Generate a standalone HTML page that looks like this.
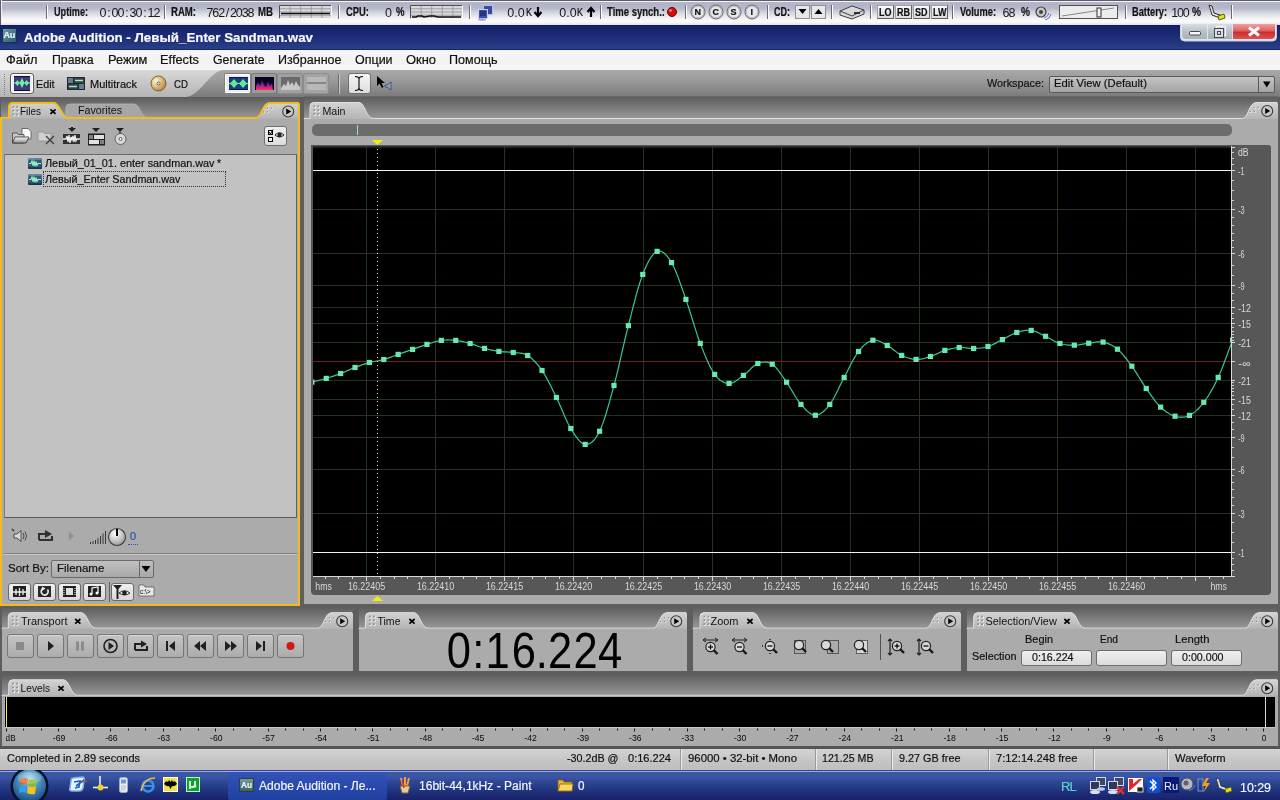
<!DOCTYPE html><html><head><meta charset="utf-8"><style>*{margin:0;padding:0;box-sizing:border-box}
html,body{width:1280px;height:800px;overflow:hidden;background:#5e5e5e;font-family:"Liberation Sans",sans-serif;position:relative}
.a{position:absolute}
.t{position:absolute;white-space:nowrap;line-height:1;-webkit-text-stroke:0.2px currentColor}
#top{left:0;top:0;width:1280px;height:25px;background:linear-gradient(#5c5c68 0,#5c5c68 1px,#f4f4f8 1px,#f4f4f8 2px,#b2b4c8 2px,#b4b6ca 8px,#d6d8e0 13px,#f6f6f8 19px,#fbfbfc 22px,#e0e0ea 25px);border-left:1px solid #5c5c68;box-shadow:inset 1px 0 0 #f0f0f4}
#title{left:0;top:25px;width:1280px;height:25px;background:linear-gradient(#101c50 0,#101c50 1px,#142268 1px,#1a2870 30%,#22347c 70%,#2a3e8a 95%,#1c2464 96%)}
#menu{left:0;top:50px;width:1280px;height:20px;background:linear-gradient(#f6f6fa,#f2f2f6 60%,#f4f4f2 70%,#f4f4f4 95%,#fcfcfc)}
#tool{left:0;top:70px;width:1280px;height:27px;background:linear-gradient(#a8a8a8,#9c9c9c 35%,#7a7a7a)}
.sep{position:absolute;width:1px;background:#707070;border-right:1px solid #ffffff}
.top-t{font-size:12px;color:#101010;top:6px}
.menu-t{font-size:13px;color:#111;top:53px}
</style></head><body><div id="wrap" style="position:absolute;left:0;top:0;width:1280px;height:800px;will-change:transform"><div id="top" class="a"></div><div class="a" style="left:46px;top:5px;width:1px;height:14px;background:#6a6a70"></div><div class="a" style="left:47px;top:5px;width:1px;height:14px;background:#fff"></div><div class="t" style="left:53.50px;top:6.44px;font-size:12px;color:#141414;font-weight:bold;font-family:'Liberation Sans',sans-serif;transform:scaleX(0.7612);transform-origin:0 0;">Uptime:</div><svg class="a" style="left:0;top:0" width="1280" height="25"><text x="103.00 109.00 115.00 121.00 127.00 133.00 139.00 145.00 151.00 157.00" y="17" text-anchor="middle" font-family="Liberation Sans" font-size="12.5" fill="#1a1a1a" transform="translate(0,0)">0:00:30:12</text></svg><div class="a" style="left:164px;top:5px;width:1px;height:14px;background:#6a6a70"></div><div class="a" style="left:165px;top:5px;width:1px;height:14px;background:#fff"></div><div class="t" style="left:170.50px;top:6.44px;font-size:12px;color:#141414;font-weight:bold;font-family:'Liberation Sans',sans-serif;transform:scaleX(0.7981);transform-origin:0 0;">RAM:</div><svg class="a" style="left:0;top:0" width="1280" height="25"><text x="209.94 215.81 221.69 227.56 233.44 239.31 245.19 251.06" y="17" text-anchor="middle" font-family="Liberation Sans" font-size="12.5" fill="#1a1a1a" transform="translate(0,0)">762/2038</text></svg><div class="t" style="left:258.00px;top:6.44px;font-size:12px;color:#141414;font-weight:bold;font-family:'Liberation Sans',sans-serif;transform:scaleX(0.8037);transform-origin:0 0;">MB</div><svg class="a" style="left:279px;top:5px" width="53" height="14"><rect x="0" y="0" width="53" height="14" fill="#d8d8dc"/><path d="M0.5,13.5 L0.5,0.5 L52.5,0.5" stroke="#505050" fill="none"/><path d="M0.5,13.5 L52.5,13.5 L52.5,0.5" stroke="#f8f8f8" fill="none"/><line x1="1" x2="52" y1="3.75" y2="3.75" stroke="#8a8a8a" stroke-width="0.7"/><line x1="1" x2="52" y1="7.00" y2="7.00" stroke="#8a8a8a" stroke-width="0.7"/><line x1="1" x2="52" y1="10.25" y2="10.25" stroke="#8a8a8a" stroke-width="0.7"/><line x1="11.1" x2="11.1" y1="1" y2="13" stroke="#8a8a8a" stroke-width="0.7"/><line x1="21.7" x2="21.7" y1="1" y2="13" stroke="#8a8a8a" stroke-width="0.7"/><line x1="32.3" x2="32.3" y1="1" y2="13" stroke="#8a8a8a" stroke-width="0.7"/><line x1="42.9" x2="42.9" y1="1" y2="13" stroke="#8a8a8a" stroke-width="0.7"/><path d="M2,8.5 L51,8.5" stroke="#101010" fill="none" stroke-width="1.6"/></svg><div class="a" style="left:338px;top:5px;width:1px;height:14px;background:#6a6a70"></div><div class="a" style="left:339px;top:5px;width:1px;height:14px;background:#fff"></div><div class="t" style="left:345.50px;top:6.44px;font-size:12px;color:#141414;font-weight:bold;font-family:'Liberation Sans',sans-serif;transform:scaleX(0.7841);transform-origin:0 0;">CPU:</div><svg class="a" style="left:0;top:0" width="1280" height="25"><text x="388.50" y="17" text-anchor="middle" font-family="Liberation Sans" font-size="12.5" fill="#1a1a1a" transform="translate(0,0)">0</text></svg><div class="t" style="left:395.50px;top:6.44px;font-size:12px;color:#141414;font-weight:bold;font-family:'Liberation Sans',sans-serif;transform:scaleX(0.7966);transform-origin:0 0;">%</div><svg class="a" style="left:410px;top:5px" width="53" height="14"><rect x="0" y="0" width="53" height="14" fill="#d8d8dc"/><path d="M0.5,13.5 L0.5,0.5 L52.5,0.5" stroke="#505050" fill="none"/><path d="M0.5,13.5 L52.5,13.5 L52.5,0.5" stroke="#f8f8f8" fill="none"/><line x1="1" x2="52" y1="3.75" y2="3.75" stroke="#8a8a8a" stroke-width="0.7"/><line x1="1" x2="52" y1="7.00" y2="7.00" stroke="#8a8a8a" stroke-width="0.7"/><line x1="1" x2="52" y1="10.25" y2="10.25" stroke="#8a8a8a" stroke-width="0.7"/><line x1="11.1" x2="11.1" y1="1" y2="13" stroke="#8a8a8a" stroke-width="0.7"/><line x1="21.7" x2="21.7" y1="1" y2="13" stroke="#8a8a8a" stroke-width="0.7"/><line x1="32.3" x2="32.3" y1="1" y2="13" stroke="#8a8a8a" stroke-width="0.7"/><line x1="42.9" x2="42.9" y1="1" y2="13" stroke="#8a8a8a" stroke-width="0.7"/><path d="M2,12 L6,12 L8,11 L12,11 L14,12 L20,11 L24,11 L28,12 L51,12" stroke="#101010" fill="none" stroke-width="1.5"/></svg><div class="a" style="left:469px;top:5px;width:1px;height:14px;background:#6a6a70"></div><div class="a" style="left:470px;top:5px;width:1px;height:14px;background:#fff"></div><svg class="a" style="left:476px;top:4px" width="18" height="17"><rect x="7.5" y="1.5" width="9" height="9" fill="#3a4aa0" stroke="#b8c0f0"/><rect x="2.5" y="5.5" width="9" height="9" fill="#4050a8" stroke="#c8d0f8"/><rect x="4" y="7" width="6" height="5" fill="#2a3480"/><ellipse cx="6" cy="15.5" rx="4" ry="1.3" fill="#a0a8e0"/></svg><svg class="a" style="left:0;top:0" width="1280" height="25"><text x="510.67 516.00 521.33" y="17" text-anchor="middle" font-family="Liberation Sans" font-size="12.5" fill="#1a1a1a" transform="translate(0,0)">0.0</text></svg><div class="t" style="left:525.50px;top:7.54px;font-size:10px;color:#101010;font-weight:normal;font-family:'Liberation Sans',sans-serif;transform:scaleX(0.8995);transform-origin:0 0;">K</div><svg class="a" style="left:533px;top:6px" width="10" height="12"><path d="M5,1 L5,9 M1.5,6 L5,10 L8.5,6" stroke="#000" stroke-width="2.2" fill="none"/></svg><svg class="a" style="left:0;top:0" width="1280" height="25"><text x="562.67 568.00 573.33" y="17" text-anchor="middle" font-family="Liberation Sans" font-size="12.5" fill="#1a1a1a" transform="translate(0,0)">0.0</text></svg><div class="t" style="left:577.00px;top:7.54px;font-size:10px;color:#101010;font-weight:normal;font-family:'Liberation Sans',sans-serif;transform:scaleX(0.8995);transform-origin:0 0;">K</div><svg class="a" style="left:586px;top:6px" width="10" height="12"><path d="M5,11 L5,3 M1.5,6 L5,2 L8.5,6" stroke="#000" stroke-width="2.2" fill="none"/></svg><div class="a" style="left:600px;top:5px;width:1px;height:14px;background:#6a6a70"></div><div class="a" style="left:601px;top:5px;width:1px;height:14px;background:#fff"></div><div class="t" style="left:606.50px;top:6.44px;font-size:12px;color:#141414;font-weight:bold;font-family:'Liberation Sans',sans-serif;transform:scaleX(0.7930);transform-origin:0 0;">Time synch.:</div><svg class="a" style="left:666px;top:6px" width="12" height="12"><circle cx="6" cy="6" r="4.5" fill="#d01010" stroke="#600"/><circle cx="4.5" cy="4.5" r="1.3" fill="#ff9090"/></svg><div class="a" style="left:685px;top:5px;width:1px;height:14px;background:#6a6a70"></div><div class="a" style="left:686px;top:5px;width:1px;height:14px;background:#fff"></div><svg class="a" style="left:690px;top:4px" width="16" height="16"><circle cx="8" cy="8" r="7" fill="#e8e8ec" stroke="#606060"/><circle cx="8" cy="8" r="5.8" fill="none" stroke="#b8b8c0"/></svg><div class="t" style="left:694.5px;top:8px;font-size:9px;color:#111;font-weight:bold;">N</div><svg class="a" style="left:708px;top:4px" width="16" height="16"><circle cx="8" cy="8" r="7" fill="#e8e8ec" stroke="#606060"/><circle cx="8" cy="8" r="5.8" fill="none" stroke="#b8b8c0"/></svg><div class="t" style="left:712.5px;top:8px;font-size:9px;color:#111;font-weight:bold;">C</div><svg class="a" style="left:726px;top:4px" width="16" height="16"><circle cx="8" cy="8" r="7" fill="#e8e8ec" stroke="#606060"/><circle cx="8" cy="8" r="5.8" fill="none" stroke="#b8b8c0"/></svg><div class="t" style="left:730.5px;top:8px;font-size:9px;color:#111;font-weight:bold;">S</div><svg class="a" style="left:744px;top:4px" width="16" height="16"><circle cx="8" cy="8" r="7" fill="#e8e8ec" stroke="#606060"/><circle cx="8" cy="8" r="5.8" fill="none" stroke="#b8b8c0"/></svg><div class="t" style="left:750.5px;top:8px;font-size:9px;color:#111;font-weight:bold;">I</div><div class="a" style="left:767px;top:5px;width:1px;height:14px;background:#6a6a70"></div><div class="a" style="left:768px;top:5px;width:1px;height:14px;background:#fff"></div><div class="t" style="left:773.50px;top:6.44px;font-size:12px;color:#141414;font-weight:bold;font-family:'Liberation Sans',sans-serif;transform:scaleX(0.7502);transform-origin:0 0;">CD:</div><svg class="a" style="left:795px;top:5px" width="32" height="14"><rect x="0.5" y="0.5" width="14" height="13" fill="#e8e8e8" stroke="#909090"/><rect x="16.5" y="0.5" width="14" height="13" fill="#e8e8e8" stroke="#909090"/><path d="M3.5,4 L11.5,4 L7.5,9Z" fill="#000"/><path d="M19.5,9 L27.5,9 L23.5,4Z" fill="#000"/></svg><div class="a" style="left:831px;top:5px;width:1px;height:14px;background:#6a6a70"></div><div class="a" style="left:832px;top:5px;width:1px;height:14px;background:#fff"></div><svg class="a" style="left:838px;top:4px" width="28" height="16"><path d="M2,7 L14,2 L26,6 L26,10 L14,15 L2,11Z" fill="#d8d8d8" stroke="#404040"/><path d="M2,7 L14,12 L26,6" fill="none" stroke="#404040"/><rect x="16" y="8" width="6" height="2" fill="#303030"/></svg><div class="a" style="left:870px;top:5px;width:1px;height:14px;background:#6a6a70"></div><div class="a" style="left:871px;top:5px;width:1px;height:14px;background:#fff"></div><div class="a" style="left:877px;top:5px;width:17px;height:14px;background:linear-gradient(#fafafa,#dcdcdc);border:1px solid #a0a0a0;border-right-color:#606060;border-bottom-color:#606060"></div><div class="t" style="left:878.5px;top:8px;font-size:10px;color:#111;font-weight:bold;transform:scaleX(0.9);transform-origin:0 0">LO</div><div class="a" style="left:895px;top:5px;width:17px;height:14px;background:linear-gradient(#fafafa,#dcdcdc);border:1px solid #a0a0a0;border-right-color:#606060;border-bottom-color:#606060"></div><div class="t" style="left:896.5px;top:8px;font-size:10px;color:#111;font-weight:bold;transform:scaleX(0.9);transform-origin:0 0">RB</div><div class="a" style="left:913px;top:5px;width:17px;height:14px;background:linear-gradient(#fafafa,#dcdcdc);border:1px solid #a0a0a0;border-right-color:#606060;border-bottom-color:#606060"></div><div class="t" style="left:914.5px;top:8px;font-size:10px;color:#111;font-weight:bold;transform:scaleX(0.9);transform-origin:0 0">SD</div><div class="a" style="left:931px;top:5px;width:17px;height:14px;background:linear-gradient(#fafafa,#dcdcdc);border:1px solid #a0a0a0;border-right-color:#606060;border-bottom-color:#606060"></div><div class="t" style="left:932.5px;top:8px;font-size:10px;color:#111;font-weight:bold;transform:scaleX(0.9);transform-origin:0 0">LW</div><div class="a" style="left:952px;top:5px;width:1px;height:14px;background:#6a6a70"></div><div class="a" style="left:953px;top:5px;width:1px;height:14px;background:#fff"></div><div class="t" style="left:959.50px;top:6.44px;font-size:12px;color:#141414;font-weight:bold;font-family:'Liberation Sans',sans-serif;transform:scaleX(0.7751);transform-origin:0 0;">Volume:</div><svg class="a" style="left:0;top:0" width="1280" height="25"><text x="1006.00 1012.00" y="17" text-anchor="middle" font-family="Liberation Sans" font-size="12.5" fill="#1a1a1a" transform="translate(0,0)">68</text></svg><div class="t" style="left:1020.50px;top:6.44px;font-size:12px;color:#141414;font-weight:bold;font-family:'Liberation Sans',sans-serif;transform:scaleX(0.8435);transform-origin:0 0;">%</div><svg class="a" style="left:1034px;top:4px" width="18" height="17"><circle cx="7" cy="8" r="5" fill="#c8c8c8" stroke="#404040" stroke-width="1.2"/><circle cx="7" cy="8" r="2" fill="#404040"/><path d="M10,14 Q14,13 15,9 M11,16 Q16,15 17,10" stroke="#6070d0" fill="none"/></svg><svg class="a" style="left:1059px;top:5px" width="59" height="14"><rect x="0.5" y="0.5" width="58" height="13" fill="#ececec" stroke="#505050"/><path d="M3,11 L55,3" stroke="#888" fill="none"/><rect x="38" y="3" width="4" height="9" fill="#f0f0f0" stroke="#303030"/></svg><div class="a" style="left:1125px;top:5px;width:1px;height:14px;background:#6a6a70"></div><div class="a" style="left:1126px;top:5px;width:1px;height:14px;background:#fff"></div><div class="t" style="left:1131.50px;top:6.44px;font-size:12px;color:#141414;font-weight:bold;font-family:'Liberation Sans',sans-serif;transform:scaleX(0.7718);transform-origin:0 0;">Battery:</div><svg class="a" style="left:0;top:0" width="1280" height="25"><text x="1174.83 1180.50 1186.17" y="17" text-anchor="middle" font-family="Liberation Sans" font-size="12.5" fill="#1a1a1a" transform="translate(0,0)">100</text></svg><div class="t" style="left:1191.50px;top:6.44px;font-size:12px;color:#141414;font-weight:bold;font-family:'Liberation Sans',sans-serif;transform:scaleX(0.8435);transform-origin:0 0;">%</div><svg class="a" style="left:1206px;top:3px" width="20" height="18"><path d="M3,2 L6,12 L14,15 L17,13 L8,10 L6,3Z" fill="#e0e0e0" stroke="#303030"/><path d="M12,13 L18,11 L19,15 L13,17Z" fill="#e0e020" stroke="#606000"/></svg><div class="a" style="left:1231px;top:5px;width:1px;height:14px;background:#6a6a70"></div><div class="a" style="left:1232px;top:5px;width:1px;height:14px;background:#fff"></div><div id="title" class="a"></div><div class="a" style="left:2px;top:28px;width:15px;height:15px;background:linear-gradient(135deg,#6a9ab0,#2c5870);border:1px solid #1a3040;border-radius:1px"></div><div class="t" style="left:3.5px;top:31px;font-size:9px;color:#e8f4f8;font-weight:bold;letter-spacing:-0.3px">Au</div><div class="t" style="left:24.00px;top:30.60px;font-size:13px;color:#f8f8ff;font-weight:bold;font-family:'Liberation Sans',sans-serif;transform:scaleX(1.0247);transform-origin:0 0;">Adobe Audition - Левый_Enter Sandman.wav</div><svg class="a" style="left:1180px;top:24px" width="98" height="18">
<path d="M0.5,0 L0.5,13 Q0.5,17 4.5,17 L92.5,17 Q96.5,17 96.5,13 L96.5,0" fill="#dfe6f0" stroke="#c8d0e0"/>
<defs><linearGradient id="wbg" x1="0" y1="0" x2="0" y2="1"><stop offset="0" stop-color="#d8dee6"/><stop offset="0.5" stop-color="#b8c0c8"/><stop offset="1" stop-color="#a8b0b8"/></linearGradient>
<linearGradient id="wbr" x1="0" y1="0" x2="0" y2="1"><stop offset="0" stop-color="#f0a0a0"/><stop offset="0.45" stop-color="#e06060"/><stop offset="0.55" stop-color="#c83030"/><stop offset="1" stop-color="#e05050"/></linearGradient></defs>
<path d="M2,0 L27,0 L27,15 L6,15 Q2,15 2,11Z" fill="url(#wbg)"/>
<rect x="28" y="0" width="24" height="15" fill="url(#wbg)"/>
<path d="M53,0 L95,0 L95,11 Q95,15 91,15 L53,15Z" fill="url(#wbr)"/>
<rect x="9.5" y="7.5" width="11" height="3.5" rx="1" fill="#f8f8f8" stroke="#404850"/>
<rect x="36.5" y="2.5" width="9" height="9" fill="none" stroke="#f8f8f8" stroke-width="1.2"/>
<rect x="34.5" y="4.5" width="9" height="9" fill="#dde" stroke="#404850" stroke-width="1"/>
<rect x="37.5" y="7.5" width="3" height="3" fill="none" stroke="#404850"/>
<path d="M69,3.5 L79,11.5 M79,3.5 L69,11.5" stroke="#fff" stroke-width="3"/>
</svg><div id="menu" class="a"></div><div class="t" style="left:6.10px;top:54.22px;font-size:12.5px;color:#111;font-weight:normal;font-family:'Liberation Sans',sans-serif;transform:scaleX(1.0283);transform-origin:0 0;">Файл</div><div class="t" style="left:51.70px;top:54.22px;font-size:12.5px;color:#111;font-weight:normal;font-family:'Liberation Sans',sans-serif;transform:scaleX(0.9852);transform-origin:0 0;">Правка</div><div class="t" style="left:107.70px;top:54.22px;font-size:12.5px;color:#111;font-weight:normal;font-family:'Liberation Sans',sans-serif;transform:scaleX(1.0223);transform-origin:0 0;">Режим</div><div class="t" style="left:160.20px;top:54.22px;font-size:12.5px;color:#111;font-weight:normal;font-family:'Liberation Sans',sans-serif;transform:scaleX(1.0268);transform-origin:0 0;">Effects</div><div class="t" style="left:212.70px;top:54.22px;font-size:12.5px;color:#111;font-weight:normal;font-family:'Liberation Sans',sans-serif;transform:scaleX(0.9881);transform-origin:0 0;">Generate</div><div class="t" style="left:278.20px;top:54.22px;font-size:12.5px;color:#111;font-weight:normal;font-family:'Liberation Sans',sans-serif;transform:scaleX(1.0024);transform-origin:0 0;">Избранное</div><div class="t" style="left:355.20px;top:54.22px;font-size:12.5px;color:#111;font-weight:normal;font-family:'Liberation Sans',sans-serif;transform:scaleX(0.9996);transform-origin:0 0;">Опции</div><div class="t" style="left:406.20px;top:54.22px;font-size:12.5px;color:#111;font-weight:normal;font-family:'Liberation Sans',sans-serif;transform:scaleX(1.0328);transform-origin:0 0;">Окно</div><div class="t" style="left:449.20px;top:54.22px;font-size:12.5px;color:#111;font-weight:normal;font-family:'Liberation Sans',sans-serif;transform:scaleX(1.0046);transform-origin:0 0;">Помощь</div><div id="tool" class="a"></div><svg class="a" style="left:0;top:70px" width="260" height="27"><defs><linearGradient id="tlg" x1="0" y1="0" x2="0" y2="1"><stop offset="0" stop-color="#d8d8d8"/><stop offset="1" stop-color="#b4b4b4"/></linearGradient></defs>
<path d="M0,0 L223,0 C210,1 200,26 186,27 L0,27Z" fill="url(#tlg)"/></svg><div class="a" style="left:4px;top:74px;width:1px;height:21px;border-left:1px dotted #808080"></div><div class="a" style="left:10px;top:73px;width:24px;height:21px;background:#eeeef4;border:1px solid #5a5a5a;border-radius:3px;box-shadow:inset 0 0 0 1px #fff"></div><svg class="a" style="left:14px;top:76px" width="16" height="15"><rect x="0" y="0" width="16" height="15" fill="#10102a"/><rect x="0" y="1" width="16" height="13" fill="#3c3a78"/>
<path d="M1,7 L3.5,4 L5.5,7 L8,2 L10.5,7 L12.5,4 L15,7 L12.5,10 L10.5,7 L8,12 L5.5,7 L3.5,10Z" fill="#70f0a0"/><path d="M0,7 L16,7" stroke="#70f0a0" stroke-width="1"/></svg><div class="t" style="left:36.20px;top:78.77px;font-size:11.5px;color:#111;font-weight:normal;font-family:'Liberation Sans',sans-serif;transform:scaleX(0.9335);transform-origin:0 0;">Edit</div><svg class="a" style="left:67px;top:77px" width="18" height="13"><rect x="0" y="0" width="18" height="13" fill="#202830"/>
<rect x="1" y="1" width="5" height="5" fill="#6a7a90"/><rect x="7" y="1" width="10" height="5" fill="#30404a"/><path d="M8,3.5 L16,3.5" stroke="#a0f0b0" stroke-width="1.5"/>
<rect x="1" y="7" width="10" height="5" fill="#30404a"/><path d="M2,9.5 L10,9.5" stroke="#a0f0b0" stroke-width="1.5"/><rect x="12" y="7" width="5" height="5" fill="#6a7a90"/></svg><div class="t" style="left:90.30px;top:78.77px;font-size:11.5px;color:#111;font-weight:normal;font-family:'Liberation Sans',sans-serif;transform:scaleX(0.9552);transform-origin:0 0;">Multitrack</div><svg class="a" style="left:150px;top:75px" width="17" height="17"><defs><radialGradient id="cdg" cx="0.35" cy="0.35" r="0.7"><stop offset="0" stop-color="#fff8e0"/><stop offset="0.5" stop-color="#e0c080"/><stop offset="1" stop-color="#b08040"/></radialGradient></defs>
<circle cx="8.5" cy="8.5" r="7.5" fill="url(#cdg)" stroke="#806030"/><circle cx="8.5" cy="8.5" r="1.5" fill="#f0f0f0" stroke="#404040" stroke-width="0.8"/></svg><div class="t" style="left:173.50px;top:78.77px;font-size:11.5px;color:#111;font-weight:normal;font-family:'Liberation Sans',sans-serif;transform:scaleX(0.8428);transform-origin:0 0;">CD</div><div class="a" style="left:224px;top:73px;width:27px;height:21px;background:#ececf2;border:1px solid #808080;border-radius:2px;box-shadow:inset 0 0 0 1px #fff"></div><svg class="a" style="left:229px;top:77px" width="19" height="13"><rect width="19" height="13" fill="#1a3a80"/><rect x="0" y="0" width="19" height="1" fill="#0a1a50"/><rect x="0" y="12" width="19" height="1" fill="#0a1a50"/>
<path d="M1,6.5 L5,2 L9,6.5 L5,11Z M10,6.5 L14,2 L18,6.5 L14,11Z" fill="#60e890"/><path d="M0,6.5 L19,6.5" stroke="#60e890" stroke-width="1.2"/></svg><div class="a" style="left:251px;top:73px;width:26px;height:21px;background:#9a9a9a;border:1px solid #7a7a7a;border-radius:2px"></div><svg class="a" style="left:255px;top:77px" width="19" height="13"><defs><linearGradient id="spg" x1="0" y1="0" x2="0" y2="1"><stop offset="0" stop-color="#100040"/><stop offset="0.5" stop-color="#8020a0"/><stop offset="1" stop-color="#ff3060"/></linearGradient></defs>
<rect width="19" height="13" fill="#0a0020"/><path d="M1,13 L1,9 L3,5 L5,9 L7,2 L9,8 L11,10 L13,4 L15,9 L17,6 L18,13Z" fill="url(#spg)"/></svg><div class="a" style="left:277px;top:73px;width:26px;height:21px;background:#a0a0a0;border:1px solid #8a8a8a;border-radius:2px"></div><svg class="a" style="left:281px;top:77px" width="19" height="13"><rect width="19" height="13" fill="#6a6a6a"/><path d="M0,11 L3,7 L5,9 L7,3 L9,8 L11,5 L13,9 L15,4 L17,8 L19,10 L19,13 L0,13Z" fill="#c8c8c8"/></svg><div class="a" style="left:303px;top:73px;width:26px;height:21px;background:#a4a4a4;border:1px solid #8e8e8e;border-radius:2px"></div><div class="a" style="left:307px;top:77px;width:19px;height:13px;background:linear-gradient(#b8b8b8 0,#b8b8b8 5px,#888 5px,#888 7px,#b8b8b8 7px)"></div><div class="a" style="left:338px;top:74px;width:1px;height:20px;background:#6a6a6a;box-shadow:1px 0 0 #c8c8c8"></div><div class="a" style="left:348px;top:73px;width:23px;height:21px;background:linear-gradient(#f4f4f4,#dedede);border:1px solid #707070;border-radius:3px"></div><svg class="a" style="left:353px;top:75px" width="12" height="17"><path d="M2,1.5 Q6,1.5 6,4 L6,13 Q6,15.5 2,15.5 M10,1.5 Q6,1.5 6,4 M6,13 Q6,15.5 10,15.5" stroke="#000" fill="none" stroke-width="1.1"/></svg><svg class="a" style="left:376px;top:75px" width="18" height="17"><path d="M1,1 L1,11 L3.5,8.5 L6,13 L7.5,12 L5.5,8 L9,8Z" fill="#000"/><path d="M9,10 L11,10 L15,7 L15,15 L11,12 L9,12Z" fill="#8aa0c0" stroke="#304060" stroke-width="0.7"/></svg><div class="t" style="left:987.00px;top:78.27px;font-size:11.5px;color:#111;font-weight:normal;font-family:'Liberation Sans',sans-serif;transform:scaleX(0.9421);transform-origin:0 0;">Workspace:</div><div class="a" style="left:1049px;top:76px;width:226px;height:17px;background:linear-gradient(#c4c4c4,#b0b0b0 60%,#a6a6a6);border:1px solid #5a5a5a;border-radius:2px"></div><div class="a" style="left:1258px;top:77px;width:1px;height:15px;background:#5a5a5a"></div><div class="t" style="left:1054.00px;top:78.27px;font-size:11.5px;color:#111;font-weight:normal;font-family:'Liberation Sans',sans-serif;transform:scaleX(0.9787);transform-origin:0 0;">Edit View (Default)</div><svg class="a" style="left:1262px;top:81px" width="10" height="8"><path d="M1,0.5 L8.5,0.5 L4.75,6.5Z" fill="#000"/></svg><svg class="a" style="left:0;top:0" width="1280" height="800"><defs><linearGradient id="gfiles" x1="0" y1="103" x2="0" y2="120" gradientUnits="userSpaceOnUse"><stop offset="0" stop-color="#d2d2d2"/><stop offset="1" stop-color="#b2b2b2"/></linearGradient><linearGradient id="gfilesh" x1="0" y1="97" x2="0" y2="118" gradientUnits="userSpaceOnUse"><stop offset="0" stop-color="#5c5c5c"/><stop offset="1" stop-color="#989898"/></linearGradient><clipPath id="gfilesc"><rect x="0" y="0" width="1280" height="118.5"/></clipPath></defs><rect x="1" y="97" width="298" height="21" fill="url(#gfilesh)"/><path d="M66,118 L66,108 Q66,104 70,104 L134,104 C140,104 141,118 148,118Z" fill="#a6a6a6" stroke="#b8b8b8" stroke-width="0.8"/><text x="78" y="113.6" font-family="Liberation Sans" font-size="11" fill="#111" textLength="44" lengthAdjust="spacingAndGlyphs">Favorites</text><path d="M1,605L1,118L9,118L9,107Q9,103 13,103L54,103C60,103 61,118 68,118L256,118C262,118 262,103 270,103L298,103L299,104L299,605Z" fill="#ababab"/><path d="M1,605L1,118L9,118L9,107Q9,103 13,103L54,103C60,103 61,118 68,118L256,118C262,118 262,103 270,103L298,103L299,104L299,605Z" fill="url(#gfiles)" clip-path="url(#gfilesc)"/><path d="M1,605L1,118L9,118L9,107Q9,103 13,103L54,103C60,103 61,118 68,118L256,118C262,118 262,103 270,103L298,103" fill="none" stroke="#e0e0e0" stroke-width="1" clip-path="url(#gfilesc)"/><path d="M1,605L1,118L9,118L9,107Q9,103 13,103L54,103C60,103 61,118 68,118L256,118C262,118 262,103 270,103L298,103L299,104L299,605Z" fill="none" stroke="#f0bc20" stroke-width="2"/><rect x="13.1" y="106.6" width="2" height="2" fill="#f8f8f8"/><rect x="12.5" y="106.0" width="1.8" height="1.8" fill="#909090"/><rect x="17.1" y="106.6" width="2" height="2" fill="#f8f8f8"/><rect x="16.5" y="106.0" width="1.8" height="1.8" fill="#909090"/><rect x="13.1" y="110.4" width="2" height="2" fill="#f8f8f8"/><rect x="12.5" y="109.8" width="1.8" height="1.8" fill="#909090"/><rect x="17.1" y="110.4" width="2" height="2" fill="#f8f8f8"/><rect x="16.5" y="109.8" width="1.8" height="1.8" fill="#909090"/><rect x="13.1" y="114.2" width="2" height="2" fill="#f8f8f8"/><rect x="12.5" y="113.6" width="1.8" height="1.8" fill="#909090"/><rect x="17.1" y="114.2" width="2" height="2" fill="#f8f8f8"/><rect x="16.5" y="113.6" width="1.8" height="1.8" fill="#909090"/><text x="20" y="115.2" font-family="Liberation Sans" font-size="11" fill="#111" textLength="21" lengthAdjust="spacingAndGlyphs">Files</text><path d="M50.4,109.3 L55.6,113.89999999999999 M55.6,109.3 L50.4,113.89999999999999" stroke="#000" stroke-width="1.7"/><rect x="267" y="107.5" width="2" height="2" fill="#f4f4f4"/><rect x="267" y="107.5" width="1.3" height="1.3" fill="#7a7a7a"/><rect x="271" y="107.5" width="2" height="2" fill="#f4f4f4"/><rect x="271" y="107.5" width="1.3" height="1.3" fill="#7a7a7a"/><rect x="263" y="111.3" width="2" height="2" fill="#f4f4f4"/><rect x="263" y="111.3" width="1.3" height="1.3" fill="#7a7a7a"/><rect x="267" y="111.3" width="2" height="2" fill="#f4f4f4"/><rect x="267" y="111.3" width="1.3" height="1.3" fill="#7a7a7a"/><circle cx="288.2" cy="111.5" r="5.5" fill="#c8c8c8" stroke="#3a3a3a" stroke-width="1.1"/><path d="M286.2,108.5 L291.2,111.5 L286.2,114.5Z" fill="#000"/></svg><svg class="a" style="left:10px;top:127px" width="125" height="20">
<defs><linearGradient id="fld" x1="0" y1="0" x2="0" y2="1"><stop offset="0" stop-color="#f8f8f8"/><stop offset="1" stop-color="#909090"/></linearGradient></defs>
<path d="M12,1.5 L18,1.5 L21,4.5 L21,12 L12,12Z" fill="#fafafa" stroke="#505050" stroke-width="0.8"/>
<path d="M2.5,6 L7,6 L8.5,7.5 L14,7.5 L14,16 L2.5,16Z" fill="#c8c8c8" stroke="#404040" stroke-width="0.8"/>
<path d="M2.5,16 L5,10 L19,10 L16,16Z" fill="url(#fld)" stroke="#303030" stroke-width="0.8"/>
<path d="M28,5 L33,5 L34.5,6.5 L41,6.5 L41,14 L28,14Z" fill="#d0d0d0" stroke="#909090" stroke-width="0.8"/>
<path d="M36,9 L44,17 M44,9 L36,17" stroke="#404040" stroke-width="1.4"/>
<path d="M58,1 L66,1 L62,5Z M61,0 L63,0 L63,2 L61,2Z" fill="#202020"/>
<rect x="53" y="7" width="17" height="10" fill="#303030"/><path d="M53,12 L56,12 L57,9 L58,15 L59,8 L60,16 L61,10 L62,13 L63,9 L64,15 L65,8 L66,14 L67,12 L70,12" stroke="#f0f0f0" stroke-width="1.3" fill="none"/>
<path d="M82,1 L90,1 L86,5Z" fill="#202020"/>
<rect x="78" y="6.5" width="17" height="12" fill="#202020"/><rect x="79" y="8" width="4" height="4" fill="#808080"/><rect x="84" y="8" width="10" height="4" fill="#e0e0e0"/><rect x="79" y="13" width="10" height="4" fill="#e0e0e0"/><rect x="90" y="13" width="4" height="4" fill="#808080"/>
<path d="M106,1 L114,1 L110,5Z" fill="#202020"/><rect x="109" y="5" width="2" height="3" fill="#404040"/>
<circle cx="110.5" cy="12" r="5.5" fill="#d8d8d8" stroke="#606060"/><circle cx="110.5" cy="12" r="1.5" fill="#fff" stroke="#404040" stroke-width="0.8"/>
</svg><div class="a" style="left:264px;top:126px;width:23px;height:20px;background:linear-gradient(#f0f0f0,#dcdcdc);border:1px solid #707070;border-radius:3px"></div><svg class="a" style="left:266px;top:128px" width="20" height="17"><rect x="2.5" y="2.5" width="4" height="4" fill="#fff" stroke="#000"/><path d="M3,4 L4.5,6 L7,1.5" stroke="#000" fill="none" stroke-width="1"/>
<rect x="2.5" y="9.5" width="4" height="4" fill="#fff" stroke="#000"/>
<path d="M9,7 Q13.5,2.5 18,7 Q13.5,11 9,7Z" fill="#fff" stroke="#202020"/><circle cx="13.5" cy="7" r="2.2" fill="#202020"/></svg><div class="a" style="left:4px;top:154px;width:293px;height:364px;background:#c2c2c2;border-top:1px solid #6a6a6a;border-left:1px solid #7a7a7a;border-bottom:1px solid #5a5a5a;border-right:1px solid #5e5e5e"></div><svg class="a" style="left:28px;top:158px" width="14" height="11"><defs><linearGradient id="fic0" x1="0" y1="0" x2="0" y2="1"><stop offset="0" stop-color="#6a8aa8"/><stop offset="1" stop-color="#1a2a48"/></linearGradient></defs><rect width="14" height="11" rx="1" fill="url(#fic0)"/><rect x="1" y="2" width="12" height="7" fill="#2a5a78"/><path d="M1,5.5 L3,5.5 L4,3 L5,8 L6,2.5 L7,8.5 L8,3.5 L9,7.5 L10,5.5 L13,5.5" stroke="#9af8c8" stroke-width="1.1" fill="none"/></svg><div class="t" style="left:44.50px;top:157.87px;font-size:11.5px;color:#111;font-weight:normal;font-family:'Liberation Sans',sans-serif;transform:scaleX(0.9423);transform-origin:0 0;">Левый_01_01. enter sandman.wav</div><svg class="a" style="left:28px;top:174px" width="14" height="11"><defs><linearGradient id="fic1" x1="0" y1="0" x2="0" y2="1"><stop offset="0" stop-color="#6a8aa8"/><stop offset="1" stop-color="#1a2a48"/></linearGradient></defs><rect width="14" height="11" rx="1" fill="url(#fic1)"/><rect x="1" y="2" width="12" height="7" fill="#2a5a78"/><path d="M1,5.5 L3,5.5 L4,3 L5,8 L6,2.5 L7,8.5 L8,3.5 L9,7.5 L10,5.5 L13,5.5" stroke="#9af8c8" stroke-width="1.1" fill="none"/></svg><div class="t" style="left:44.50px;top:173.87px;font-size:11.5px;color:#111;font-weight:normal;font-family:'Liberation Sans',sans-serif;transform:scaleX(0.9364);transform-origin:0 0;">Левый_Enter Sandman.wav</div><div class="t" style="left:217.00px;top:157.69px;font-size:11px;color:#111;font-weight:normal;font-family:'Liberation Sans',sans-serif;transform:scaleX(0.9345);transform-origin:0 0;">*</div><div class="a" style="left:43px;top:171px;width:183px;height:16px;border:1px dotted #303030"></div><svg class="a" style="left:10px;top:527px" width="130" height="20">
<path d="M2,2 L4,4" stroke="#303030" stroke-width="1.2"/>
<path d="M4,7 L7,7 L11,3.5 L11,14.5 L7,11 L4,11Z" fill="#d8d8d8" stroke="#404040" stroke-width="0.9"/>
<path d="M13,6 Q15,9 13,12 M15,4.5 Q18,9 15,13.5" stroke="#404040" fill="none" stroke-width="0.9"/>
<path d="M29,13 L29,7 L36,7 M42,9 L42,13 L29,13" stroke="#303030" fill="none" stroke-width="2"/><path d="M35,3 L42,7 L35,11Z" fill="#303030"/>
<path d="M59,4.5 L64,9 L59,13.5Z" fill="#909090"/>
<path d="M80.5,17 L80.5,15 M83,17 L83,14 M85.5,17 L85.5,13 M88,17 L88,11 M90.5,17 L90.5,9 M93,17 L93,6.5 M95.5,17 L95.5,4" stroke="#383838" stroke-width="1"/>
</svg><svg class="a" style="left:107px;top:527px" width="22" height="20"><defs><radialGradient id="kng" cx="0.4" cy="0.3" r="0.8"><stop offset="0" stop-color="#ffffff"/><stop offset="1" stop-color="#909090"/></radialGradient></defs><circle cx="10" cy="10" r="8.5" fill="url(#kng)" stroke="#404040" stroke-width="1.2"/><path d="M10,2 L10,9" stroke="#000" stroke-width="2"/></svg><div class="t" style="left:130px;top:531px;font-size:11px;color:#2850b0;font-weight:normal;">0</div><div class="a" style="left:128px;top:544px;width:10px;height:1px;border-top:1px dotted #2850b0"></div><div class="a" style="left:4px;top:553px;width:293px;height:1px;background:#808080;box-shadow:0 1px 0 #c8c8c8"></div><div class="t" style="left:8px;top:563px;font-size:11.5px;color:#111;font-weight:normal;">Sort By:</div><div class="a" style="left:51px;top:560px;width:103px;height:18px;background:linear-gradient(#c0c0c0,#a8a8a8);border:1px solid #6a6a6a;border-radius:2px"></div><div class="a" style="left:139px;top:561px;width:1px;height:16px;background:#6a6a6a"></div><div class="t" style="left:57px;top:563px;font-size:11.5px;color:#111;font-weight:normal;">Filename</div><svg class="a" style="left:141px;top:565px" width="10" height="8"><path d="M0.5,1 L9.5,1 L5,7Z" fill="#000"/></svg><div class="a" style="left:8px;top:583px;width:23px;height:18px;background:linear-gradient(#f0f0f0,#d8d8d8);border:1px solid #6a6a6a;border-radius:3px"></div><div class="a" style="left:33px;top:583px;width:23px;height:18px;background:linear-gradient(#f0f0f0,#d8d8d8);border:1px solid #6a6a6a;border-radius:3px"></div><div class="a" style="left:58px;top:583px;width:23px;height:18px;background:linear-gradient(#f0f0f0,#d8d8d8);border:1px solid #6a6a6a;border-radius:3px"></div><div class="a" style="left:83px;top:583px;width:23px;height:18px;background:linear-gradient(#f0f0f0,#d8d8d8);border:1px solid #6a6a6a;border-radius:3px"></div><div class="a" style="left:111px;top:583px;width:23px;height:18px;background:linear-gradient(#f0f0f0,#d8d8d8);border:1px solid #6a6a6a;border-radius:3px"></div><div class="a" style="left:109px;top:582px;width:1px;height:20px;background:#606060"></div><svg class="a" style="left:8px;top:583px" width="150" height="18">
<rect x="5" y="3" width="13" height="11" fill="#202020"/><path d="M5,9 L18,9 M8,6 L8,12 M11.5,5 L11.5,13 M15,6 L15,12" stroke="#f0f0f0" stroke-width="1.3" fill="none"/>
<rect x="30" y="3" width="13" height="11" fill="#282828"/><path d="M39.5,6.5 A3.5,3.5 0 1 1 35,5.5" stroke="#f0f0f0" stroke-width="1.6" fill="none"/><path d="M34,3.5 L37.5,5.5 L34,7.8Z" fill="#f0f0f0"/>
<rect x="55" y="3" width="13" height="11" fill="#202020"/><rect x="58" y="5" width="7" height="7" fill="#e0e0e0"/><path d="M56,5 L56,12 M67,5 L67,12" stroke="#fff" stroke-dasharray="1 1"/>
<rect x="80" y="3" width="13" height="11" fill="#202020"/><path d="M84,11 L84,5 L90,4 L90,10" stroke="#fff" stroke-width="1.2" fill="none"/><circle cx="83" cy="11" r="1.5" fill="#fff"/><circle cx="89" cy="10" r="1.5" fill="#fff"/>
<path d="M105,2 L114,2 L110.5,6 L110.5,16 L108.5,16 L108.5,6Z" fill="#202020"/><path d="M111,10 Q116.5,5.5 122,10 Q116.5,14 111,10Z" fill="#f0f0f0" stroke="#303030"/><circle cx="116.5" cy="10" r="2.3" fill="#202020"/>
<path d="M131,2 L136,2 L137,4 L146,4 L146,13 L131,13Z" fill="#e8e8e8" stroke="#606060" stroke-width="0.8"/>
<text x="132" y="11" font-family="Liberation Sans" font-size="6.5" fill="#000">c:\&gt;</text>
</svg><svg class="a" style="left:0;top:0" width="1280" height="800"><defs><linearGradient id="gmain" x1="0" y1="102.5" x2="0" y2="120.5" gradientUnits="userSpaceOnUse"><stop offset="0" stop-color="#d2d2d2"/><stop offset="1" stop-color="#b2b2b2"/></linearGradient><linearGradient id="gmainh" x1="0" y1="96.5" x2="0" y2="118.5" gradientUnits="userSpaceOnUse"><stop offset="0" stop-color="#5c5c5c"/><stop offset="1" stop-color="#989898"/></linearGradient><clipPath id="gmainc"><rect x="0" y="0" width="1280" height="119.0"/></clipPath></defs><rect x="304" y="96.5" width="974" height="22.0" fill="url(#gmainh)"/><path d="M304,604L304,118.5L310,118.5L310,106.5Q310,102.5 314,102.5L359,102.5C365,102.5 366,118.5 373,118.5L1242.5,118.5C1248.5,118.5 1248.5,102.5 1256.5,102.5L1277,102.5L1278,103.5L1278,604Z" fill="#ababab"/><path d="M304,604L304,118.5L310,118.5L310,106.5Q310,102.5 314,102.5L359,102.5C365,102.5 366,118.5 373,118.5L1242.5,118.5C1248.5,118.5 1248.5,102.5 1256.5,102.5L1277,102.5L1278,103.5L1278,604Z" fill="url(#gmain)" clip-path="url(#gmainc)"/><path d="M304,604L304,118.5L310,118.5L310,106.5Q310,102.5 314,102.5L359,102.5C365,102.5 366,118.5 373,118.5L1242.5,118.5C1248.5,118.5 1248.5,102.5 1256.5,102.5L1277,102.5" fill="none" stroke="#e0e0e0" stroke-width="1" clip-path="url(#gmainc)"/><rect x="314.1" y="106.1" width="2" height="2" fill="#f8f8f8"/><rect x="313.5" y="105.5" width="1.8" height="1.8" fill="#909090"/><rect x="318.1" y="106.1" width="2" height="2" fill="#f8f8f8"/><rect x="317.5" y="105.5" width="1.8" height="1.8" fill="#909090"/><rect x="314.1" y="109.9" width="2" height="2" fill="#f8f8f8"/><rect x="313.5" y="109.3" width="1.8" height="1.8" fill="#909090"/><rect x="318.1" y="109.9" width="2" height="2" fill="#f8f8f8"/><rect x="317.5" y="109.3" width="1.8" height="1.8" fill="#909090"/><rect x="314.1" y="113.7" width="2" height="2" fill="#f8f8f8"/><rect x="313.5" y="113.1" width="1.8" height="1.8" fill="#909090"/><rect x="318.1" y="113.7" width="2" height="2" fill="#f8f8f8"/><rect x="317.5" y="113.1" width="1.8" height="1.8" fill="#909090"/><text x="322.5" y="114.7" font-family="Liberation Sans" font-size="11" fill="#111" textLength="23" lengthAdjust="spacingAndGlyphs">Main</text><rect x="1253.5" y="107.0" width="2" height="2" fill="#f4f4f4"/><rect x="1253.5" y="107.0" width="1.3" height="1.3" fill="#7a7a7a"/><rect x="1257.5" y="107.0" width="2" height="2" fill="#f4f4f4"/><rect x="1257.5" y="107.0" width="1.3" height="1.3" fill="#7a7a7a"/><rect x="1249.5" y="110.8" width="2" height="2" fill="#f4f4f4"/><rect x="1249.5" y="110.8" width="1.3" height="1.3" fill="#7a7a7a"/><rect x="1253.5" y="110.8" width="2" height="2" fill="#f4f4f4"/><rect x="1253.5" y="110.8" width="1.3" height="1.3" fill="#7a7a7a"/><circle cx="1267.2" cy="111.0" r="5.5" fill="#c8c8c8" stroke="#3a3a3a" stroke-width="1.1"/><path d="M1265.2,108.0 L1270.2,111.0 L1265.2,114.0Z" fill="#000"/></svg><div class="a" style="left:312px;top:124px;width:920px;height:12px;background:#6c6c6c;border-radius:5px"></div><div class="a" style="left:357px;top:125px;width:1px;height:10px;background:#9fe0c8"></div><div class="a" style="left:311px;top:145px;width:960px;height:450px;background:#575757;border-radius:0 3px 4px 4px"></div><svg class="a" style="left:0;top:0" width="1280" height="800"><rect x="313" y="146" width="918" height="430" fill="#000"/><defs><clipPath id="wc"><rect x="313" y="146" width="918" height="430"/></clipPath></defs><g clip-path="url(#wc)"><rect x="313" y="342" width="918" height="1" fill="#203420"/><rect x="313" y="380" width="918" height="1" fill="#203420"/><rect x="313" y="323" width="918" height="1" fill="#203420"/><rect x="313" y="399" width="918" height="1" fill="#203420"/><rect x="313" y="307" width="918" height="1" fill="#203420"/><rect x="313" y="415" width="918" height="1" fill="#203420"/><rect x="313" y="285" width="918" height="1" fill="#203420"/><rect x="313" y="437" width="918" height="1" fill="#203420"/><rect x="313" y="253" width="918" height="1" fill="#203420"/><rect x="313" y="469" width="918" height="1" fill="#203420"/><rect x="313" y="209" width="918" height="1" fill="#203420"/><rect x="313" y="513" width="918" height="1" fill="#203420"/><rect x="366" y="146" width="1" height="430" fill="#203420"/><rect x="435" y="146" width="1" height="430" fill="#203420"/><rect x="504" y="146" width="1" height="430" fill="#203420"/><rect x="573" y="146" width="1" height="430" fill="#203420"/><rect x="643" y="146" width="1" height="430" fill="#203420"/><rect x="712" y="146" width="1" height="430" fill="#203420"/><rect x="781" y="146" width="1" height="430" fill="#203420"/><rect x="850" y="146" width="1" height="430" fill="#203420"/><rect x="919" y="146" width="1" height="430" fill="#203420"/><rect x="988" y="146" width="1" height="430" fill="#203420"/><rect x="1057" y="146" width="1" height="430" fill="#203420"/><rect x="1126" y="146" width="1" height="430" fill="#203420"/><rect x="1195" y="146" width="1" height="430" fill="#203420"/><rect x="313" y="170" width="918" height="1" fill="#f4f4f4"/><rect x="313" y="552" width="918" height="1" fill="#f4f4f4"/><rect x="313" y="361" width="918" height="1" fill="#7c1a22"/><line x1="377.5" x2="377.5" y1="149" y2="576" stroke="#f4f0b0" stroke-width="1" stroke-dasharray="1 3"/><path d="M311.86,382.10 L312.72,381.89 L313.82,381.62 L315.12,381.30 L316.58,380.94 L318.15,380.56 L319.80,380.14 L321.48,379.71 L323.14,379.28 L324.74,378.84 L326.25,378.40 L327.68,377.96 L329.12,377.51 L330.56,377.05 L332.00,376.58 L333.44,376.09 L334.88,375.60 L336.32,375.09 L337.75,374.57 L339.19,374.04 L340.63,373.50 L342.07,372.94 L343.51,372.35 L344.95,371.75 L346.39,371.13 L347.82,370.51 L349.26,369.88 L350.70,369.26 L352.14,368.65 L353.58,368.06 L355.02,367.50 L356.46,366.95 L357.90,366.40 L359.33,365.86 L360.77,365.33 L362.21,364.81 L363.65,364.31 L365.09,363.82 L366.53,363.36 L367.97,362.91 L369.40,362.50 L370.84,362.13 L372.28,361.81 L373.72,361.52 L375.16,361.26 L376.60,361.01 L378.04,360.76 L379.47,360.49 L380.91,360.20 L382.35,359.88 L383.79,359.50 L385.23,359.07 L386.67,358.61 L388.11,358.12 L389.54,357.61 L390.98,357.07 L392.42,356.53 L393.86,355.99 L395.30,355.45 L396.74,354.92 L398.18,354.40 L399.61,353.90 L401.05,353.39 L402.49,352.89 L403.93,352.39 L405.37,351.89 L406.81,351.40 L408.25,350.90 L409.68,350.40 L411.12,349.90 L412.56,349.40 L414.00,348.90 L415.44,348.38 L416.88,347.87 L418.32,347.35 L419.75,346.84 L421.19,346.33 L422.63,345.83 L424.07,345.34 L425.51,344.86 L426.95,344.40 L428.39,343.94 L429.83,343.47 L431.26,343.00 L432.70,342.54 L434.14,342.09 L435.58,341.66 L437.02,341.27 L438.46,340.93 L439.90,340.63 L441.33,340.40 L442.77,340.22 L444.21,340.09 L445.65,340.01 L447.09,339.96 L448.53,339.96 L449.97,339.98 L451.40,340.05 L452.84,340.14 L454.28,340.26 L455.72,340.40 L457.16,340.58 L458.60,340.79 L460.04,341.05 L461.47,341.33 L462.91,341.64 L464.35,341.98 L465.79,342.34 L467.23,342.72 L468.67,343.10 L470.11,343.50 L471.54,343.93 L472.98,344.40 L474.42,344.90 L475.86,345.42 L477.30,345.96 L478.74,346.49 L480.18,347.01 L481.61,347.51 L483.05,347.98 L484.49,348.40 L485.93,348.79 L487.37,349.15 L488.81,349.50 L490.25,349.83 L491.69,350.14 L493.12,350.43 L494.56,350.70 L496.00,350.95 L497.44,351.19 L498.88,351.40 L500.32,351.58 L501.76,351.71 L503.19,351.81 L504.63,351.89 L506.07,351.95 L507.51,352.01 L508.95,352.09 L510.39,352.19 L511.83,352.32 L513.26,352.50 L514.70,352.67 L516.14,352.79 L517.58,352.88 L519.02,352.99 L520.46,353.13 L521.90,353.34 L523.33,353.66 L524.77,354.10 L526.21,354.71 L527.65,355.50 L529.09,356.46 L530.53,357.54 L531.97,358.74 L533.40,360.06 L534.84,361.50 L536.28,363.06 L537.72,364.74 L539.16,366.54 L540.60,368.46 L542.04,370.50 L543.47,372.70 L544.91,375.07 L546.35,377.59 L547.79,380.24 L549.23,383.00 L550.67,385.84 L552.11,388.73 L553.54,391.65 L554.98,394.58 L556.42,397.50 L557.86,400.51 L559.30,403.69 L560.74,406.98 L562.18,410.34 L563.62,413.69 L565.05,417.00 L566.49,420.18 L567.93,423.20 L569.37,425.99 L570.81,428.50 L572.25,430.83 L573.69,433.11 L575.12,435.29 L576.56,437.34 L578.00,439.21 L579.44,440.86 L580.88,442.24 L582.32,443.32 L583.76,444.05 L585.19,444.40 L586.63,444.41 L588.07,444.15 L589.51,443.62 L590.95,442.80 L592.39,441.68 L593.83,440.25 L595.26,438.51 L596.70,436.43 L598.14,434.02 L599.58,431.25 L601.02,428.06 L602.46,424.41 L603.90,420.37 L605.33,415.98 L606.77,411.30 L608.21,406.38 L609.65,401.29 L611.09,396.08 L612.53,390.79 L613.97,385.50 L615.40,380.04 L616.84,374.29 L618.28,368.30 L619.72,362.14 L621.16,355.89 L622.60,349.61 L624.04,343.38 L625.47,337.25 L626.91,331.30 L628.35,325.60 L629.79,320.00 L631.23,314.35 L632.67,308.71 L634.11,303.14 L635.55,297.69 L636.98,292.43 L638.42,287.41 L639.86,282.70 L641.30,278.34 L642.74,274.40 L644.18,270.80 L645.62,267.45 L647.05,264.35 L648.49,261.53 L649.93,259.00 L651.37,256.78 L652.81,254.90 L654.25,253.36 L655.69,252.19 L657.12,251.40 L658.56,251.02 L660.00,251.04 L661.44,251.44 L662.88,252.19 L664.32,253.26 L665.76,254.64 L667.19,256.28 L668.63,258.17 L670.07,260.29 L671.51,262.60 L672.95,265.21 L674.39,268.21 L675.83,271.53 L677.26,275.13 L678.70,278.95 L680.14,282.93 L681.58,287.02 L683.02,291.17 L684.46,295.31 L685.90,299.40 L687.33,303.57 L688.77,307.95 L690.21,312.48 L691.65,317.11 L693.09,321.76 L694.53,326.39 L695.97,330.93 L697.40,335.32 L698.84,339.49 L700.28,343.40 L701.72,347.13 L703.16,350.78 L704.60,354.35 L706.04,357.79 L707.47,361.09 L708.91,364.21 L710.35,367.13 L711.79,369.82 L713.23,372.25 L714.67,374.40 L716.11,376.27 L717.55,377.88 L718.98,379.25 L720.42,380.40 L721.86,381.34 L723.30,382.08 L724.74,382.64 L726.18,383.04 L727.62,383.29 L729.05,383.40 L730.49,383.31 L731.93,382.95 L733.37,382.37 L734.81,381.61 L736.25,380.71 L737.69,379.70 L739.12,378.62 L740.56,377.52 L742.00,376.43 L743.44,375.40 L744.88,374.31 L746.32,373.07 L747.76,371.72 L749.19,370.31 L750.63,368.90 L752.07,367.54 L753.51,366.26 L754.95,365.13 L756.39,364.20 L757.83,363.50 L759.26,362.99 L760.70,362.56 L762.14,362.25 L763.58,362.06 L765.02,362.01 L766.46,362.10 L767.90,362.36 L769.33,362.79 L770.77,363.42 L772.21,364.25 L773.65,365.33 L775.09,366.68 L776.53,368.25 L777.97,370.01 L779.40,371.91 L780.84,373.92 L782.28,376.00 L783.72,378.11 L785.16,380.20 L786.60,382.25 L788.04,384.35 L789.48,386.60 L790.91,388.96 L792.35,391.37 L793.79,393.80 L795.23,396.19 L796.67,398.50 L798.11,400.67 L799.55,402.67 L800.98,404.45 L802.42,406.09 L803.86,407.69 L805.30,409.21 L806.74,410.63 L808.18,411.91 L809.62,413.03 L811.05,413.96 L812.49,414.65 L813.93,415.10 L815.37,415.25 L816.81,415.12 L818.25,414.73 L819.69,414.11 L821.12,413.26 L822.56,412.21 L824.00,410.97 L825.44,409.56 L826.88,407.99 L828.32,406.28 L829.76,404.45 L831.19,402.40 L832.63,400.07 L834.07,397.51 L835.51,394.77 L836.95,391.90 L838.39,388.95 L839.83,385.98 L841.26,383.04 L842.70,380.18 L844.14,377.45 L845.58,374.75 L847.02,371.96 L848.46,369.12 L849.90,366.29 L851.33,363.49 L852.77,360.77 L854.21,358.17 L855.65,355.73 L857.09,353.49 L858.53,351.50 L859.97,349.71 L861.41,348.05 L862.84,346.52 L864.28,345.15 L865.72,343.93 L867.16,342.86 L868.60,341.95 L870.04,341.21 L871.48,340.64 L872.91,340.25 L874.35,340.09 L875.79,340.17 L877.23,340.47 L878.67,340.94 L880.11,341.55 L881.55,342.27 L882.98,343.06 L884.42,343.89 L885.86,344.71 L887.30,345.50 L888.74,346.33 L890.18,347.28 L891.62,348.31 L893.05,349.41 L894.49,350.53 L895.93,351.64 L897.37,352.72 L898.81,353.72 L900.25,354.63 L901.69,355.40 L903.12,356.07 L904.56,356.69 L906.00,357.25 L907.44,357.76 L908.88,358.20 L910.32,358.58 L911.76,358.89 L913.19,359.14 L914.63,359.31 L916.07,359.40 L917.51,359.40 L918.95,359.31 L920.39,359.14 L921.83,358.89 L923.27,358.58 L924.70,358.22 L926.14,357.82 L927.58,357.40 L929.02,356.95 L930.46,356.50 L931.90,356.01 L933.34,355.43 L934.77,354.80 L936.21,354.14 L937.65,353.45 L939.09,352.76 L940.53,352.10 L941.97,351.47 L943.41,350.89 L944.84,350.40 L946.28,349.96 L947.72,349.55 L949.16,349.17 L950.60,348.82 L952.04,348.51 L953.48,348.23 L954.91,347.98 L956.35,347.78 L957.79,347.62 L959.23,347.50 L960.67,347.46 L962.11,347.50 L963.55,347.61 L964.98,347.76 L966.42,347.94 L967.86,348.13 L969.30,348.30 L970.74,348.43 L972.18,348.50 L973.62,348.50 L975.05,348.44 L976.49,348.37 L977.93,348.27 L979.37,348.15 L980.81,347.99 L982.25,347.80 L983.69,347.55 L985.12,347.26 L986.56,346.91 L988.00,346.50 L989.44,346.01 L990.88,345.44 L992.32,344.80 L993.76,344.10 L995.19,343.37 L996.63,342.61 L998.07,341.84 L999.51,341.07 L1000.95,340.32 L1002.39,339.60 L1003.83,338.88 L1005.27,338.11 L1006.70,337.33 L1008.14,336.53 L1009.58,335.75 L1011.02,334.99 L1012.46,334.27 L1013.90,333.60 L1015.34,333.01 L1016.77,332.50 L1018.21,332.05 L1019.65,331.63 L1021.09,331.25 L1022.53,330.92 L1023.97,330.64 L1025.41,330.42 L1026.84,330.28 L1028.28,330.23 L1029.72,330.26 L1031.16,330.40 L1032.60,330.66 L1034.04,331.05 L1035.48,331.54 L1036.91,332.12 L1038.35,332.77 L1039.79,333.46 L1041.23,334.18 L1042.67,334.91 L1044.11,335.62 L1045.55,336.30 L1046.98,336.99 L1048.42,337.74 L1049.86,338.54 L1051.30,339.35 L1052.74,340.16 L1054.18,340.95 L1055.62,341.70 L1057.05,342.39 L1058.49,343.00 L1059.93,343.50 L1061.37,343.91 L1062.81,344.25 L1064.25,344.53 L1065.69,344.75 L1067.12,344.93 L1068.56,345.05 L1070.00,345.14 L1071.44,345.18 L1072.88,345.20 L1074.32,345.20 L1075.76,345.15 L1077.20,345.02 L1078.63,344.84 L1080.07,344.62 L1081.51,344.38 L1082.95,344.11 L1084.39,343.85 L1085.83,343.60 L1087.27,343.38 L1088.70,343.20 L1090.14,343.02 L1091.58,342.79 L1093.02,342.55 L1094.46,342.30 L1095.90,342.08 L1097.34,341.91 L1098.77,341.80 L1100.21,341.78 L1101.65,341.87 L1103.09,342.10 L1104.53,342.43 L1105.97,342.84 L1107.41,343.32 L1108.84,343.87 L1110.28,344.52 L1111.72,345.25 L1113.16,346.08 L1114.60,347.02 L1116.04,348.05 L1117.48,349.20 L1118.91,350.48 L1120.35,351.88 L1121.79,353.41 L1123.23,355.03 L1124.67,356.75 L1126.11,358.54 L1127.55,360.40 L1128.98,362.30 L1130.42,364.24 L1131.86,366.20 L1133.30,368.23 L1134.74,370.38 L1136.18,372.62 L1137.62,374.92 L1139.06,377.25 L1140.49,379.59 L1141.93,381.92 L1143.37,384.19 L1144.81,386.40 L1146.25,388.50 L1147.69,390.55 L1149.13,392.61 L1150.56,394.65 L1152.00,396.66 L1153.44,398.63 L1154.88,400.52 L1156.32,402.33 L1157.76,404.05 L1159.20,405.64 L1160.63,407.10 L1162.07,408.44 L1163.51,409.69 L1164.95,410.84 L1166.39,411.90 L1167.83,412.86 L1169.27,413.73 L1170.70,414.50 L1172.14,415.17 L1173.58,415.73 L1175.02,416.20 L1176.46,416.58 L1177.90,416.87 L1179.34,417.08 L1180.77,417.18 L1182.21,417.19 L1183.65,417.08 L1185.09,416.86 L1186.53,416.51 L1187.97,416.02 L1189.41,415.40 L1190.84,414.64 L1192.28,413.76 L1193.72,412.75 L1195.16,411.61 L1196.60,410.36 L1198.04,408.98 L1199.48,407.48 L1200.91,405.87 L1202.35,404.14 L1203.79,402.30 L1205.23,400.34 L1206.67,398.28 L1208.11,396.09 L1209.55,393.79 L1210.98,391.37 L1212.42,388.83 L1213.86,386.16 L1215.30,383.37 L1216.74,380.45 L1218.18,377.40 L1219.68,374.00 L1221.29,370.12 L1222.95,365.92 L1224.62,361.54 L1226.27,357.14 L1227.85,352.87 L1229.31,348.86 L1230.61,345.29 L1231.71,342.28 L1232.56,340.00" fill="none" stroke="#3cc890" stroke-width="1.2"/><rect x="309.26" y="379.50" width="5.2" height="5.2" fill="#6ae8b0"/><rect x="323.65" y="375.80" width="5.2" height="5.2" fill="#6ae8b0"/><rect x="338.03" y="370.90" width="5.2" height="5.2" fill="#6ae8b0"/><rect x="352.42" y="364.90" width="5.2" height="5.2" fill="#6ae8b0"/><rect x="366.80" y="359.90" width="5.2" height="5.2" fill="#6ae8b0"/><rect x="381.19" y="356.90" width="5.2" height="5.2" fill="#6ae8b0"/><rect x="395.58" y="351.80" width="5.2" height="5.2" fill="#6ae8b0"/><rect x="409.96" y="346.80" width="5.2" height="5.2" fill="#6ae8b0"/><rect x="424.35" y="341.80" width="5.2" height="5.2" fill="#6ae8b0"/><rect x="438.73" y="337.80" width="5.2" height="5.2" fill="#6ae8b0"/><rect x="453.12" y="337.80" width="5.2" height="5.2" fill="#6ae8b0"/><rect x="467.51" y="340.90" width="5.2" height="5.2" fill="#6ae8b0"/><rect x="481.89" y="345.80" width="5.2" height="5.2" fill="#6ae8b0"/><rect x="496.28" y="348.80" width="5.2" height="5.2" fill="#6ae8b0"/><rect x="510.66" y="349.90" width="5.2" height="5.2" fill="#6ae8b0"/><rect x="525.05" y="352.90" width="5.2" height="5.2" fill="#6ae8b0"/><rect x="539.44" y="367.90" width="5.2" height="5.2" fill="#6ae8b0"/><rect x="553.82" y="394.90" width="5.2" height="5.2" fill="#6ae8b0"/><rect x="568.21" y="425.90" width="5.2" height="5.2" fill="#6ae8b0"/><rect x="582.59" y="441.80" width="5.2" height="5.2" fill="#6ae8b0"/><rect x="596.98" y="428.65" width="5.2" height="5.2" fill="#6ae8b0"/><rect x="611.37" y="382.90" width="5.2" height="5.2" fill="#6ae8b0"/><rect x="625.75" y="323.00" width="5.2" height="5.2" fill="#6ae8b0"/><rect x="640.14" y="271.80" width="5.2" height="5.2" fill="#6ae8b0"/><rect x="654.52" y="248.80" width="5.2" height="5.2" fill="#6ae8b0"/><rect x="668.91" y="260.00" width="5.2" height="5.2" fill="#6ae8b0"/><rect x="683.30" y="296.80" width="5.2" height="5.2" fill="#6ae8b0"/><rect x="697.68" y="340.80" width="5.2" height="5.2" fill="#6ae8b0"/><rect x="712.07" y="371.80" width="5.2" height="5.2" fill="#6ae8b0"/><rect x="726.45" y="380.80" width="5.2" height="5.2" fill="#6ae8b0"/><rect x="740.84" y="372.80" width="5.2" height="5.2" fill="#6ae8b0"/><rect x="755.23" y="360.90" width="5.2" height="5.2" fill="#6ae8b0"/><rect x="769.61" y="361.65" width="5.2" height="5.2" fill="#6ae8b0"/><rect x="784.00" y="379.65" width="5.2" height="5.2" fill="#6ae8b0"/><rect x="798.38" y="401.85" width="5.2" height="5.2" fill="#6ae8b0"/><rect x="812.77" y="412.65" width="5.2" height="5.2" fill="#6ae8b0"/><rect x="827.16" y="401.85" width="5.2" height="5.2" fill="#6ae8b0"/><rect x="841.54" y="374.85" width="5.2" height="5.2" fill="#6ae8b0"/><rect x="855.93" y="348.90" width="5.2" height="5.2" fill="#6ae8b0"/><rect x="870.31" y="337.65" width="5.2" height="5.2" fill="#6ae8b0"/><rect x="884.70" y="342.90" width="5.2" height="5.2" fill="#6ae8b0"/><rect x="899.09" y="352.80" width="5.2" height="5.2" fill="#6ae8b0"/><rect x="913.47" y="356.80" width="5.2" height="5.2" fill="#6ae8b0"/><rect x="927.86" y="353.90" width="5.2" height="5.2" fill="#6ae8b0"/><rect x="942.24" y="347.80" width="5.2" height="5.2" fill="#6ae8b0"/><rect x="956.63" y="344.90" width="5.2" height="5.2" fill="#6ae8b0"/><rect x="971.02" y="345.90" width="5.2" height="5.2" fill="#6ae8b0"/><rect x="985.40" y="343.90" width="5.2" height="5.2" fill="#6ae8b0"/><rect x="999.79" y="337.00" width="5.2" height="5.2" fill="#6ae8b0"/><rect x="1014.17" y="329.90" width="5.2" height="5.2" fill="#6ae8b0"/><rect x="1028.56" y="327.80" width="5.2" height="5.2" fill="#6ae8b0"/><rect x="1042.95" y="333.70" width="5.2" height="5.2" fill="#6ae8b0"/><rect x="1057.33" y="340.90" width="5.2" height="5.2" fill="#6ae8b0"/><rect x="1071.72" y="342.60" width="5.2" height="5.2" fill="#6ae8b0"/><rect x="1086.10" y="340.60" width="5.2" height="5.2" fill="#6ae8b0"/><rect x="1100.49" y="339.50" width="5.2" height="5.2" fill="#6ae8b0"/><rect x="1114.88" y="346.60" width="5.2" height="5.2" fill="#6ae8b0"/><rect x="1129.26" y="363.60" width="5.2" height="5.2" fill="#6ae8b0"/><rect x="1143.65" y="385.90" width="5.2" height="5.2" fill="#6ae8b0"/><rect x="1158.03" y="404.50" width="5.2" height="5.2" fill="#6ae8b0"/><rect x="1172.42" y="413.60" width="5.2" height="5.2" fill="#6ae8b0"/><rect x="1186.81" y="412.80" width="5.2" height="5.2" fill="#6ae8b0"/><rect x="1201.19" y="399.70" width="5.2" height="5.2" fill="#6ae8b0"/><rect x="1215.58" y="374.80" width="5.2" height="5.2" fill="#6ae8b0"/><rect x="1229.96" y="337.40" width="5.2" height="5.2" fill="#6ae8b0"/></g><rect x="1231" y="146" width="1" height="431" fill="#d8d8d8"/><rect x="1231" y="147" width="4" height="1" fill="#d8d8d8"/><rect x="1231" y="170" width="4" height="1" fill="#d8d8d8"/><text x="1238.2" y="175.3" font-family="Liberation Sans" font-size="10" fill="#d8d8d8" textLength="6.5" lengthAdjust="spacingAndGlyphs">-1</text><rect x="1231" y="209" width="4" height="1" fill="#d8d8d8"/><text x="1238.2" y="214.3" font-family="Liberation Sans" font-size="10" fill="#d8d8d8" textLength="6.5" lengthAdjust="spacingAndGlyphs">-3</text><rect x="1231" y="253" width="4" height="1" fill="#d8d8d8"/><text x="1238.2" y="258.3" font-family="Liberation Sans" font-size="10" fill="#d8d8d8" textLength="6.5" lengthAdjust="spacingAndGlyphs">-6</text><rect x="1231" y="285" width="4" height="1" fill="#d8d8d8"/><text x="1238.2" y="290.3" font-family="Liberation Sans" font-size="10" fill="#d8d8d8" textLength="6.5" lengthAdjust="spacingAndGlyphs">-9</text><rect x="1231" y="307" width="4" height="1" fill="#d8d8d8"/><text x="1238.2" y="312.3" font-family="Liberation Sans" font-size="10" fill="#d8d8d8" textLength="12.7" lengthAdjust="spacingAndGlyphs">-12</text><rect x="1231" y="323" width="4" height="1" fill="#d8d8d8"/><text x="1238.2" y="328.3" font-family="Liberation Sans" font-size="10" fill="#d8d8d8" textLength="12.7" lengthAdjust="spacingAndGlyphs">-15</text><rect x="1231" y="342" width="4" height="1" fill="#d8d8d8"/><text x="1238.2" y="347.3" font-family="Liberation Sans" font-size="10" fill="#d8d8d8" textLength="12.7" lengthAdjust="spacingAndGlyphs">-21</text><rect x="1231" y="552" width="4" height="1" fill="#d8d8d8"/><text x="1238.2" y="557.3" font-family="Liberation Sans" font-size="10" fill="#d8d8d8" textLength="6.5" lengthAdjust="spacingAndGlyphs">-1</text><rect x="1231" y="513" width="4" height="1" fill="#d8d8d8"/><text x="1238.2" y="518.3" font-family="Liberation Sans" font-size="10" fill="#d8d8d8" textLength="6.5" lengthAdjust="spacingAndGlyphs">-3</text><rect x="1231" y="469" width="4" height="1" fill="#d8d8d8"/><text x="1238.2" y="474.3" font-family="Liberation Sans" font-size="10" fill="#d8d8d8" textLength="6.5" lengthAdjust="spacingAndGlyphs">-6</text><rect x="1231" y="437" width="4" height="1" fill="#d8d8d8"/><text x="1238.2" y="442.3" font-family="Liberation Sans" font-size="10" fill="#d8d8d8" textLength="6.5" lengthAdjust="spacingAndGlyphs">-9</text><rect x="1231" y="415" width="4" height="1" fill="#d8d8d8"/><text x="1238.2" y="420.3" font-family="Liberation Sans" font-size="10" fill="#d8d8d8" textLength="12.7" lengthAdjust="spacingAndGlyphs">-12</text><rect x="1231" y="399" width="4" height="1" fill="#d8d8d8"/><text x="1238.2" y="404.3" font-family="Liberation Sans" font-size="10" fill="#d8d8d8" textLength="12.7" lengthAdjust="spacingAndGlyphs">-15</text><rect x="1231" y="380" width="4" height="1" fill="#d8d8d8"/><text x="1238.2" y="385.3" font-family="Liberation Sans" font-size="10" fill="#d8d8d8" textLength="12.7" lengthAdjust="spacingAndGlyphs">-21</text><rect x="1231" y="152" width="3" height="1" fill="#d0d0d0"/><rect x="1231" y="570" width="3" height="1" fill="#d0d0d0"/><rect x="1231" y="158" width="3" height="1" fill="#d0d0d0"/><rect x="1231" y="564" width="3" height="1" fill="#d0d0d0"/><rect x="1231" y="164" width="3" height="1" fill="#d0d0d0"/><rect x="1231" y="558" width="3" height="1" fill="#d0d0d0"/><rect x="1231" y="180" width="3" height="1" fill="#d0d0d0"/><rect x="1231" y="542" width="3" height="1" fill="#d0d0d0"/><rect x="1231" y="190" width="3" height="1" fill="#d0d0d0"/><rect x="1231" y="532" width="3" height="1" fill="#d0d0d0"/><rect x="1231" y="200" width="3" height="1" fill="#d0d0d0"/><rect x="1231" y="522" width="3" height="1" fill="#d0d0d0"/><rect x="1231" y="217" width="3" height="1" fill="#d0d0d0"/><rect x="1231" y="505" width="3" height="1" fill="#d0d0d0"/><rect x="1231" y="225" width="3" height="1" fill="#d0d0d0"/><rect x="1231" y="497" width="3" height="1" fill="#d0d0d0"/><rect x="1231" y="233" width="3" height="1" fill="#d0d0d0"/><rect x="1231" y="489" width="3" height="1" fill="#d0d0d0"/><rect x="1231" y="240" width="3" height="1" fill="#d0d0d0"/><rect x="1231" y="482" width="3" height="1" fill="#d0d0d0"/><rect x="1231" y="247" width="3" height="1" fill="#d0d0d0"/><rect x="1231" y="475" width="3" height="1" fill="#d0d0d0"/><rect x="1231" y="265" width="3" height="1" fill="#d0d0d0"/><rect x="1231" y="457" width="3" height="1" fill="#d0d0d0"/><rect x="1231" y="275" width="3" height="1" fill="#d0d0d0"/><rect x="1231" y="447" width="3" height="1" fill="#d0d0d0"/><rect x="1231" y="293" width="3" height="1" fill="#d0d0d0"/><rect x="1231" y="429" width="3" height="1" fill="#d0d0d0"/><rect x="1231" y="300" width="3" height="1" fill="#d0d0d0"/><rect x="1231" y="422" width="3" height="1" fill="#d0d0d0"/><rect x="1231" y="313" width="3" height="1" fill="#d0d0d0"/><rect x="1231" y="409" width="3" height="1" fill="#d0d0d0"/><rect x="1231" y="318" width="3" height="1" fill="#d0d0d0"/><rect x="1231" y="404" width="3" height="1" fill="#d0d0d0"/><rect x="1231" y="327" width="3" height="1" fill="#d0d0d0"/><rect x="1231" y="395" width="3" height="1" fill="#d0d0d0"/><rect x="1231" y="331" width="3" height="1" fill="#d0d0d0"/><rect x="1231" y="391" width="3" height="1" fill="#d0d0d0"/><rect x="1231" y="334" width="3" height="1" fill="#d0d0d0"/><rect x="1231" y="388" width="3" height="1" fill="#d0d0d0"/><rect x="1231" y="337" width="3" height="1" fill="#d0d0d0"/><rect x="1231" y="385" width="3" height="1" fill="#d0d0d0"/><rect x="1231" y="340" width="3" height="1" fill="#d0d0d0"/><rect x="1231" y="382" width="3" height="1" fill="#d0d0d0"/><rect x="1231" y="361" width="4" height="1" fill="#d8d8d8"/><text x="1238.2" y="366.5" font-family="Liberation Sans" font-size="10" fill="#d8d8d8" textLength="12.5" lengthAdjust="spacingAndGlyphs">-∞</text><text x="1238" y="156" font-family="Liberation Sans" font-size="10" fill="#d8d8d8" textLength="10.6" lengthAdjust="spacingAndGlyphs">dB</text><rect x="1231" y="576" width="4" height="1" fill="#d8d8d8"/><rect x="313" y="576" width="919" height="1" fill="#d8d8d8"/><rect x="325" y="576" width="1" height="3" fill="#d8d8d8"/><rect x="338" y="576" width="1" height="3" fill="#d8d8d8"/><rect x="352" y="576" width="1" height="3" fill="#d8d8d8"/><rect x="366" y="576" width="1" height="5" fill="#d8d8d8"/><rect x="380" y="576" width="1" height="3" fill="#d8d8d8"/><rect x="394" y="576" width="1" height="3" fill="#d8d8d8"/><rect x="407" y="576" width="1" height="3" fill="#d8d8d8"/><rect x="421" y="576" width="1" height="3" fill="#d8d8d8"/><rect x="435" y="576" width="1" height="5" fill="#d8d8d8"/><rect x="449" y="576" width="1" height="3" fill="#d8d8d8"/><rect x="463" y="576" width="1" height="3" fill="#d8d8d8"/><rect x="476" y="576" width="1" height="3" fill="#d8d8d8"/><rect x="490" y="576" width="1" height="3" fill="#d8d8d8"/><rect x="504" y="576" width="1" height="5" fill="#d8d8d8"/><rect x="518" y="576" width="1" height="3" fill="#d8d8d8"/><rect x="532" y="576" width="1" height="3" fill="#d8d8d8"/><rect x="545" y="576" width="1" height="3" fill="#d8d8d8"/><rect x="559" y="576" width="1" height="3" fill="#d8d8d8"/><rect x="573" y="576" width="1" height="5" fill="#d8d8d8"/><rect x="587" y="576" width="1" height="3" fill="#d8d8d8"/><rect x="601" y="576" width="1" height="3" fill="#d8d8d8"/><rect x="615" y="576" width="1" height="3" fill="#d8d8d8"/><rect x="629" y="576" width="1" height="3" fill="#d8d8d8"/><rect x="643" y="576" width="1" height="5" fill="#d8d8d8"/><rect x="657" y="576" width="1" height="3" fill="#d8d8d8"/><rect x="671" y="576" width="1" height="3" fill="#d8d8d8"/><rect x="684" y="576" width="1" height="3" fill="#d8d8d8"/><rect x="698" y="576" width="1" height="3" fill="#d8d8d8"/><rect x="712" y="576" width="1" height="5" fill="#d8d8d8"/><rect x="726" y="576" width="1" height="3" fill="#d8d8d8"/><rect x="740" y="576" width="1" height="3" fill="#d8d8d8"/><rect x="753" y="576" width="1" height="3" fill="#d8d8d8"/><rect x="767" y="576" width="1" height="3" fill="#d8d8d8"/><rect x="781" y="576" width="1" height="5" fill="#d8d8d8"/><rect x="795" y="576" width="1" height="3" fill="#d8d8d8"/><rect x="809" y="576" width="1" height="3" fill="#d8d8d8"/><rect x="822" y="576" width="1" height="3" fill="#d8d8d8"/><rect x="836" y="576" width="1" height="3" fill="#d8d8d8"/><rect x="850" y="576" width="1" height="5" fill="#d8d8d8"/><rect x="864" y="576" width="1" height="3" fill="#d8d8d8"/><rect x="878" y="576" width="1" height="3" fill="#d8d8d8"/><rect x="891" y="576" width="1" height="3" fill="#d8d8d8"/><rect x="905" y="576" width="1" height="3" fill="#d8d8d8"/><rect x="919" y="576" width="1" height="5" fill="#d8d8d8"/><rect x="933" y="576" width="1" height="3" fill="#d8d8d8"/><rect x="947" y="576" width="1" height="3" fill="#d8d8d8"/><rect x="960" y="576" width="1" height="3" fill="#d8d8d8"/><rect x="974" y="576" width="1" height="3" fill="#d8d8d8"/><rect x="988" y="576" width="1" height="5" fill="#d8d8d8"/><rect x="1002" y="576" width="1" height="3" fill="#d8d8d8"/><rect x="1016" y="576" width="1" height="3" fill="#d8d8d8"/><rect x="1029" y="576" width="1" height="3" fill="#d8d8d8"/><rect x="1043" y="576" width="1" height="3" fill="#d8d8d8"/><rect x="1057" y="576" width="1" height="5" fill="#d8d8d8"/><rect x="1071" y="576" width="1" height="3" fill="#d8d8d8"/><rect x="1085" y="576" width="1" height="3" fill="#d8d8d8"/><rect x="1098" y="576" width="1" height="3" fill="#d8d8d8"/><rect x="1112" y="576" width="1" height="3" fill="#d8d8d8"/><rect x="1126" y="576" width="1" height="5" fill="#d8d8d8"/><rect x="1140" y="576" width="1" height="3" fill="#d8d8d8"/><rect x="1154" y="576" width="1" height="3" fill="#d8d8d8"/><rect x="1167" y="576" width="1" height="3" fill="#d8d8d8"/><rect x="1181" y="576" width="1" height="3" fill="#d8d8d8"/><rect x="1195" y="576" width="1" height="5" fill="#d8d8d8"/><rect x="1209" y="576" width="1" height="3" fill="#d8d8d8"/><rect x="1223" y="576" width="1" height="3" fill="#d8d8d8"/><text x="315.3" y="590" font-family="Liberation Sans" font-size="10" fill="#d8d8d8" textLength="16.5" lengthAdjust="spacingAndGlyphs">hms</text><text x="1210.5" y="590" font-family="Liberation Sans" font-size="10" fill="#d8d8d8" textLength="16.5" lengthAdjust="spacingAndGlyphs">hms</text><text x="347.9" y="590" font-family="Liberation Sans" font-size="10" fill="#d8d8d8" textLength="37.3" lengthAdjust="spacingAndGlyphs">16.22405</text><text x="416.9" y="590" font-family="Liberation Sans" font-size="10" fill="#d8d8d8" textLength="37.3" lengthAdjust="spacingAndGlyphs">16.22410</text><text x="485.9" y="590" font-family="Liberation Sans" font-size="10" fill="#d8d8d8" textLength="37.3" lengthAdjust="spacingAndGlyphs">16.22415</text><text x="554.9" y="590" font-family="Liberation Sans" font-size="10" fill="#d8d8d8" textLength="37.3" lengthAdjust="spacingAndGlyphs">16.22420</text><text x="624.9" y="590" font-family="Liberation Sans" font-size="10" fill="#d8d8d8" textLength="37.3" lengthAdjust="spacingAndGlyphs">16.22425</text><text x="693.9" y="590" font-family="Liberation Sans" font-size="10" fill="#d8d8d8" textLength="37.3" lengthAdjust="spacingAndGlyphs">16.22430</text><text x="762.9" y="590" font-family="Liberation Sans" font-size="10" fill="#d8d8d8" textLength="37.3" lengthAdjust="spacingAndGlyphs">16.22435</text><text x="831.9" y="590" font-family="Liberation Sans" font-size="10" fill="#d8d8d8" textLength="37.3" lengthAdjust="spacingAndGlyphs">16.22440</text><text x="900.9" y="590" font-family="Liberation Sans" font-size="10" fill="#d8d8d8" textLength="37.3" lengthAdjust="spacingAndGlyphs">16.22445</text><text x="969.9" y="590" font-family="Liberation Sans" font-size="10" fill="#d8d8d8" textLength="37.3" lengthAdjust="spacingAndGlyphs">16.22450</text><text x="1038.9" y="590" font-family="Liberation Sans" font-size="10" fill="#d8d8d8" textLength="37.3" lengthAdjust="spacingAndGlyphs">16.22455</text><text x="1107.9" y="590" font-family="Liberation Sans" font-size="10" fill="#d8d8d8" textLength="37.3" lengthAdjust="spacingAndGlyphs">16.22460</text><path d="M372,140 L383,140 L377.5,145Z" fill="#f0f000"/><path d="M372,601 L383,601 L377.5,596Z" fill="#f0f000"/></svg><div class="a" style="left:313px;top:146px;width:918px;height:3px;background:linear-gradient(#3a3a3a,rgba(0,0,0,0))"></div><svg class="a" style="left:0;top:0" width="1280" height="800"><defs><linearGradient id="gtr" x1="0" y1="612.7" x2="0" y2="630.2" gradientUnits="userSpaceOnUse"><stop offset="0" stop-color="#d2d2d2"/><stop offset="1" stop-color="#b2b2b2"/></linearGradient><linearGradient id="gtrh" x1="0" y1="606.7" x2="0" y2="628.2" gradientUnits="userSpaceOnUse"><stop offset="0" stop-color="#5c5c5c"/><stop offset="1" stop-color="#989898"/></linearGradient><clipPath id="gtrc"><rect x="0" y="0" width="1280" height="628.7"/></clipPath></defs><rect x="2" y="606.7" width="351" height="21.5" fill="url(#gtrh)"/><path d="M2,671L2,628.2L8.3,628.2L8.3,616.7Q8.3,612.7 12.3,612.7L81.5,612.7C87.5,612.7 88.5,628.2 95.5,628.2L318,628.2C324,628.2 324,612.7 332,612.7L352,612.7L353,613.7L353,671Z" fill="#ababab"/><path d="M2,671L2,628.2L8.3,628.2L8.3,616.7Q8.3,612.7 12.3,612.7L81.5,612.7C87.5,612.7 88.5,628.2 95.5,628.2L318,628.2C324,628.2 324,612.7 332,612.7L352,612.7L353,613.7L353,671Z" fill="url(#gtr)" clip-path="url(#gtrc)"/><path d="M2,671L2,628.2L8.3,628.2L8.3,616.7Q8.3,612.7 12.3,612.7L81.5,612.7C87.5,612.7 88.5,628.2 95.5,628.2L318,628.2C324,628.2 324,612.7 332,612.7L352,612.7" fill="none" stroke="#e0e0e0" stroke-width="1" clip-path="url(#gtrc)"/><rect x="12.4" y="616.3" width="2" height="2" fill="#f8f8f8"/><rect x="11.8" y="615.7" width="1.8" height="1.8" fill="#909090"/><rect x="16.4" y="616.3" width="2" height="2" fill="#f8f8f8"/><rect x="15.8" y="615.7" width="1.8" height="1.8" fill="#909090"/><rect x="12.4" y="620.1" width="2" height="2" fill="#f8f8f8"/><rect x="11.8" y="619.5" width="1.8" height="1.8" fill="#909090"/><rect x="16.4" y="620.1" width="2" height="2" fill="#f8f8f8"/><rect x="15.8" y="619.5" width="1.8" height="1.8" fill="#909090"/><rect x="12.4" y="623.9" width="2" height="2" fill="#f8f8f8"/><rect x="11.8" y="623.3" width="1.8" height="1.8" fill="#909090"/><rect x="16.4" y="623.9" width="2" height="2" fill="#f8f8f8"/><rect x="15.8" y="623.3" width="1.8" height="1.8" fill="#909090"/><text x="21" y="624.9000000000001" font-family="Liberation Sans" font-size="11" fill="#111" textLength="46.5" lengthAdjust="spacingAndGlyphs">Transport</text><path d="M75.2,619.0000000000001 L80.39999999999999,623.6 M80.39999999999999,619.0000000000001 L75.2,623.6" stroke="#000" stroke-width="1.7"/><rect x="329" y="617.2" width="2" height="2" fill="#f4f4f4"/><rect x="329" y="617.2" width="1.3" height="1.3" fill="#7a7a7a"/><rect x="333" y="617.2" width="2" height="2" fill="#f4f4f4"/><rect x="333" y="617.2" width="1.3" height="1.3" fill="#7a7a7a"/><rect x="325" y="621.0" width="2" height="2" fill="#f4f4f4"/><rect x="325" y="621.0" width="1.3" height="1.3" fill="#7a7a7a"/><rect x="329" y="621.0" width="2" height="2" fill="#f4f4f4"/><rect x="329" y="621.0" width="1.3" height="1.3" fill="#7a7a7a"/><circle cx="342.2" cy="621.2" r="5.5" fill="#c8c8c8" stroke="#3a3a3a" stroke-width="1.1"/><path d="M340.2,618.2 L345.2,621.2 L340.2,624.2Z" fill="#000"/></svg><div class="a" style="left:7px;top:634px;width:27px;height:24px;background:linear-gradient(#c4c4c4,#acacac);border:1px solid #767676;border-radius:3px;box-shadow:inset 0 1px 0 #d8d8d8"></div><svg class="a" style="left:7px;top:634px" width="27" height="24"><rect x="9" y="8" width="8" height="8" fill="#8a8a8a"/></svg><div class="a" style="left:37px;top:634px;width:27px;height:24px;background:linear-gradient(#c4c4c4,#acacac);border:1px solid #767676;border-radius:3px;box-shadow:inset 0 1px 0 #d8d8d8"></div><svg class="a" style="left:37px;top:634px" width="27" height="24"><path d="M11,7 L17,12 L11,17Z" fill="#202020"/></svg><div class="a" style="left:67px;top:634px;width:27px;height:24px;background:linear-gradient(#c4c4c4,#acacac);border:1px solid #767676;border-radius:3px;box-shadow:inset 0 1px 0 #d8d8d8"></div><svg class="a" style="left:67px;top:634px" width="27" height="24"><rect x="9" y="7.5" width="3" height="9" fill="#8a8a8a"/><rect x="14" y="7.5" width="3" height="9" fill="#8a8a8a"/></svg><div class="a" style="left:97px;top:634px;width:27px;height:24px;background:linear-gradient(#c4c4c4,#acacac);border:1px solid #767676;border-radius:3px;box-shadow:inset 0 1px 0 #d8d8d8"></div><svg class="a" style="left:97px;top:634px" width="27" height="24"><circle cx="13.5" cy="12" r="6.5" fill="none" stroke="#202020" stroke-width="1.6"/><path d="M11.5,8 L17,12 L11.5,16Z" fill="#202020"/></svg><div class="a" style="left:127px;top:634px;width:27px;height:24px;background:linear-gradient(#c4c4c4,#acacac);border:1px solid #767676;border-radius:3px;box-shadow:inset 0 1px 0 #d8d8d8"></div><svg class="a" style="left:127px;top:634px" width="27" height="24"><path d="M8,16 L8,10 L14,10 M20,12 L20,16 L8,16" stroke="#202020" fill="none" stroke-width="2"/><path d="M14,6.5 L20,10 L14,13.5Z" fill="#202020"/></svg><div class="a" style="left:157px;top:634px;width:27px;height:24px;background:linear-gradient(#c4c4c4,#acacac);border:1px solid #767676;border-radius:3px;box-shadow:inset 0 1px 0 #d8d8d8"></div><svg class="a" style="left:157px;top:634px" width="27" height="24"><rect x="9" y="7" width="2" height="10" fill="#202020"/><path d="M18,7 L12,12 L18,17Z" fill="#202020"/></svg><div class="a" style="left:187px;top:634px;width:27px;height:24px;background:linear-gradient(#c4c4c4,#acacac);border:1px solid #767676;border-radius:3px;box-shadow:inset 0 1px 0 #d8d8d8"></div><svg class="a" style="left:187px;top:634px" width="27" height="24"><path d="M13,7 L7,12 L13,17Z M19,7 L13,12 L19,17Z" fill="#202020"/></svg><div class="a" style="left:217px;top:634px;width:27px;height:24px;background:linear-gradient(#c4c4c4,#acacac);border:1px solid #767676;border-radius:3px;box-shadow:inset 0 1px 0 #d8d8d8"></div><svg class="a" style="left:217px;top:634px" width="27" height="24"><path d="M8,7 L14,12 L8,17Z M14,7 L20,12 L14,17Z" fill="#202020"/></svg><div class="a" style="left:247px;top:634px;width:27px;height:24px;background:linear-gradient(#c4c4c4,#acacac);border:1px solid #767676;border-radius:3px;box-shadow:inset 0 1px 0 #d8d8d8"></div><svg class="a" style="left:247px;top:634px" width="27" height="24"><path d="M9,7 L15,12 L9,17Z" fill="#202020"/><rect x="16" y="7" width="2" height="10" fill="#202020"/></svg><div class="a" style="left:277px;top:634px;width:27px;height:24px;background:linear-gradient(#c4c4c4,#acacac);border:1px solid #767676;border-radius:3px;box-shadow:inset 0 1px 0 #d8d8d8"></div><svg class="a" style="left:277px;top:634px" width="27" height="24"><circle cx="13.5" cy="12" r="4" fill="#d01818"/></svg><svg class="a" style="left:0;top:0" width="1280" height="800"><defs><linearGradient id="gtime" x1="0" y1="612.7" x2="0" y2="630.2" gradientUnits="userSpaceOnUse"><stop offset="0" stop-color="#d2d2d2"/><stop offset="1" stop-color="#b2b2b2"/></linearGradient><linearGradient id="gtimeh" x1="0" y1="606.7" x2="0" y2="628.2" gradientUnits="userSpaceOnUse"><stop offset="0" stop-color="#5c5c5c"/><stop offset="1" stop-color="#989898"/></linearGradient><clipPath id="gtimec"><rect x="0" y="0" width="1280" height="628.7"/></clipPath></defs><rect x="359" y="606.7" width="328" height="21.5" fill="url(#gtimeh)"/><path d="M359,671L359,628.2L365.5,628.2L365.5,616.7Q365.5,612.7 369.5,612.7L414,612.7C420,612.7 421,628.2 428,628.2L653,628.2C659,628.2 659,612.7 667,612.7L686,612.7L687,613.7L687,671Z" fill="#ababab"/><path d="M359,671L359,628.2L365.5,628.2L365.5,616.7Q365.5,612.7 369.5,612.7L414,612.7C420,612.7 421,628.2 428,628.2L653,628.2C659,628.2 659,612.7 667,612.7L686,612.7L687,613.7L687,671Z" fill="url(#gtime)" clip-path="url(#gtimec)"/><path d="M359,671L359,628.2L365.5,628.2L365.5,616.7Q365.5,612.7 369.5,612.7L414,612.7C420,612.7 421,628.2 428,628.2L653,628.2C659,628.2 659,612.7 667,612.7L686,612.7" fill="none" stroke="#e0e0e0" stroke-width="1" clip-path="url(#gtimec)"/><rect x="369.6" y="616.3" width="2" height="2" fill="#f8f8f8"/><rect x="369.0" y="615.7" width="1.8" height="1.8" fill="#909090"/><rect x="373.6" y="616.3" width="2" height="2" fill="#f8f8f8"/><rect x="373.0" y="615.7" width="1.8" height="1.8" fill="#909090"/><rect x="369.6" y="620.1" width="2" height="2" fill="#f8f8f8"/><rect x="369.0" y="619.5" width="1.8" height="1.8" fill="#909090"/><rect x="373.6" y="620.1" width="2" height="2" fill="#f8f8f8"/><rect x="373.0" y="619.5" width="1.8" height="1.8" fill="#909090"/><rect x="369.6" y="623.9" width="2" height="2" fill="#f8f8f8"/><rect x="369.0" y="623.3" width="1.8" height="1.8" fill="#909090"/><rect x="373.6" y="623.9" width="2" height="2" fill="#f8f8f8"/><rect x="373.0" y="623.3" width="1.8" height="1.8" fill="#909090"/><text x="377.5" y="624.9000000000001" font-family="Liberation Sans" font-size="11" fill="#111" textLength="23" lengthAdjust="spacingAndGlyphs">Time</text><path d="M409.4,619.0000000000001 L414.6,623.6 M414.6,619.0000000000001 L409.4,623.6" stroke="#000" stroke-width="1.7"/><rect x="664" y="617.2" width="2" height="2" fill="#f4f4f4"/><rect x="664" y="617.2" width="1.3" height="1.3" fill="#7a7a7a"/><rect x="668" y="617.2" width="2" height="2" fill="#f4f4f4"/><rect x="668" y="617.2" width="1.3" height="1.3" fill="#7a7a7a"/><rect x="660" y="621.0" width="2" height="2" fill="#f4f4f4"/><rect x="660" y="621.0" width="1.3" height="1.3" fill="#7a7a7a"/><rect x="664" y="621.0" width="2" height="2" fill="#f4f4f4"/><rect x="664" y="621.0" width="1.3" height="1.3" fill="#7a7a7a"/><circle cx="676.2" cy="621.2" r="5.5" fill="#c8c8c8" stroke="#3a3a3a" stroke-width="1.1"/><path d="M674.2,618.2 L679.2,621.2 L674.2,624.2Z" fill="#000"/></svg><svg class="a" style="left:0;top:0" width="1280" height="800"><text x="0" y="667.8" text-anchor="middle" font-family="Liberation Sans" font-size="50" fill="#000" transform="translate(458.9,0) scale(0.87,1)">0</text><text x="0" y="667.8" text-anchor="middle" font-family="Liberation Sans" font-size="50" fill="#000" transform="translate(478.2,0) scale(0.87,1)">:</text><text x="0" y="667.8" text-anchor="middle" font-family="Liberation Sans" font-size="50" fill="#000" transform="translate(497.6,0) scale(0.87,1)">1</text><text x="0" y="667.8" text-anchor="middle" font-family="Liberation Sans" font-size="50" fill="#000" transform="translate(523.9,0) scale(0.87,1)">6</text><text x="0" y="667.8" text-anchor="middle" font-family="Liberation Sans" font-size="50" fill="#000" transform="translate(541.7,0) scale(0.87,1)">.</text><text x="0" y="667.8" text-anchor="middle" font-family="Liberation Sans" font-size="50" fill="#000" transform="translate(560.2,0) scale(0.87,1)">2</text><text x="0" y="667.8" text-anchor="middle" font-family="Liberation Sans" font-size="50" fill="#000" transform="translate(585.5,0) scale(0.87,1)">2</text><text x="0" y="667.8" text-anchor="middle" font-family="Liberation Sans" font-size="50" fill="#000" transform="translate(610.2,0) scale(0.87,1)">4</text></svg><svg class="a" style="left:0;top:0" width="1280" height="800"><defs><linearGradient id="gzoom" x1="0" y1="612.7" x2="0" y2="630.2" gradientUnits="userSpaceOnUse"><stop offset="0" stop-color="#d2d2d2"/><stop offset="1" stop-color="#b2b2b2"/></linearGradient><linearGradient id="gzoomh" x1="0" y1="606.7" x2="0" y2="628.2" gradientUnits="userSpaceOnUse"><stop offset="0" stop-color="#5c5c5c"/><stop offset="1" stop-color="#989898"/></linearGradient><clipPath id="gzoomc"><rect x="0" y="0" width="1280" height="628.7"/></clipPath></defs><rect x="693" y="606.7" width="268" height="21.5" fill="url(#gzoomh)"/><path d="M693,671L693,628.2L700,628.2L700,616.7Q700,612.7 704,612.7L753,612.7C759,612.7 760,628.2 767,628.2L926,628.2C932,628.2 932,612.7 940,612.7L960,612.7L961,613.7L961,671Z" fill="#ababab"/><path d="M693,671L693,628.2L700,628.2L700,616.7Q700,612.7 704,612.7L753,612.7C759,612.7 760,628.2 767,628.2L926,628.2C932,628.2 932,612.7 940,612.7L960,612.7L961,613.7L961,671Z" fill="url(#gzoom)" clip-path="url(#gzoomc)"/><path d="M693,671L693,628.2L700,628.2L700,616.7Q700,612.7 704,612.7L753,612.7C759,612.7 760,628.2 767,628.2L926,628.2C932,628.2 932,612.7 940,612.7L960,612.7" fill="none" stroke="#e0e0e0" stroke-width="1" clip-path="url(#gzoomc)"/><rect x="704.1" y="616.3" width="2" height="2" fill="#f8f8f8"/><rect x="703.5" y="615.7" width="1.8" height="1.8" fill="#909090"/><rect x="708.1" y="616.3" width="2" height="2" fill="#f8f8f8"/><rect x="707.5" y="615.7" width="1.8" height="1.8" fill="#909090"/><rect x="704.1" y="620.1" width="2" height="2" fill="#f8f8f8"/><rect x="703.5" y="619.5" width="1.8" height="1.8" fill="#909090"/><rect x="708.1" y="620.1" width="2" height="2" fill="#f8f8f8"/><rect x="707.5" y="619.5" width="1.8" height="1.8" fill="#909090"/><rect x="704.1" y="623.9" width="2" height="2" fill="#f8f8f8"/><rect x="703.5" y="623.3" width="1.8" height="1.8" fill="#909090"/><rect x="708.1" y="623.9" width="2" height="2" fill="#f8f8f8"/><rect x="707.5" y="623.3" width="1.8" height="1.8" fill="#909090"/><text x="710.5" y="624.9000000000001" font-family="Liberation Sans" font-size="11" fill="#111" textLength="28" lengthAdjust="spacingAndGlyphs">Zoom</text><path d="M747.4,619.0000000000001 L752.6,623.6 M752.6,619.0000000000001 L747.4,623.6" stroke="#000" stroke-width="1.7"/><rect x="937" y="617.2" width="2" height="2" fill="#f4f4f4"/><rect x="937" y="617.2" width="1.3" height="1.3" fill="#7a7a7a"/><rect x="941" y="617.2" width="2" height="2" fill="#f4f4f4"/><rect x="941" y="617.2" width="1.3" height="1.3" fill="#7a7a7a"/><rect x="933" y="621.0" width="2" height="2" fill="#f4f4f4"/><rect x="933" y="621.0" width="1.3" height="1.3" fill="#7a7a7a"/><rect x="937" y="621.0" width="2" height="2" fill="#f4f4f4"/><rect x="937" y="621.0" width="1.3" height="1.3" fill="#7a7a7a"/><circle cx="950.2" cy="621.2" r="5.5" fill="#c8c8c8" stroke="#3a3a3a" stroke-width="1.1"/><path d="M948.2,618.2 L953.2,621.2 L948.2,624.2Z" fill="#000"/></svg><svg class="a" style="left:693px;top:631px" width="268" height="43"><path d="M10,9 L25,9 M10,9 L13,7 M10,9 L13,11 M25,9 L22,7 M25,9 L22,11" stroke="#202020" stroke-width="1"/><circle cx="17.5" cy="16" r="4.6" fill="#d8d8d8" stroke="#202020" stroke-width="1.2"/><path d="M20.5,19 L24.5,23" stroke="#181818" stroke-width="2.4"/><path d="M15.0,16 L20.0,16" stroke="#000" stroke-width="1.2"/><path d="M17.5,13.5 L17.5,18.5" stroke="#000" stroke-width="1.2"/><path d="M39,9 L54,9 M39,9 L42,7 M39,9 L42,11 M54,9 L51,7 M54,9 L51,11" stroke="#202020" stroke-width="1"/><circle cx="46.5" cy="16" r="4.6" fill="#d8d8d8" stroke="#202020" stroke-width="1.2"/><path d="M49.5,19 L53.5,23" stroke="#181818" stroke-width="2.4"/><path d="M44.0,16 L49.0,16" stroke="#000" stroke-width="1.2"/><circle cx="77" cy="15" r="4.6" fill="#d8d8d8" stroke="#202020" stroke-width="1.2"/><path d="M80,18 L84,22" stroke="#181818" stroke-width="2.4"/><path d="M74.5,15 L79.5,15" stroke="#000" stroke-width="1.2"/><path d="M77,8 L77,9 M77,22 L77,23 M69,15 L70,15" stroke="#202020" stroke-width="1.5"/><rect x="101.5" y="9.5" width="11" height="13" fill="none" stroke="#000" stroke-width="1" stroke-dasharray="1 1"/><circle cx="106" cy="14" r="4.6" fill="#d8d8d8" stroke="#202020" stroke-width="1.2"/><path d="M109,17 L113,21" stroke="#181818" stroke-width="2.4"/><rect x="134.5" y="9.5" width="11" height="13" fill="none" stroke="#000" stroke-width="1" stroke-dasharray="1 1"/><circle cx="133" cy="14" r="4.6" fill="#d8d8d8" stroke="#202020" stroke-width="1.2"/><path d="M136,17 L140,21" stroke="#181818" stroke-width="2.4"/><rect x="163.5" y="9.5" width="11" height="13" fill="#d8d8d8" stroke="#000" stroke-width="1" stroke-dasharray="1 1"/><circle cx="166" cy="14" r="4.6" fill="#d8d8d8" stroke="#202020" stroke-width="1.2"/><path d="M169,17 L173,21" stroke="#181818" stroke-width="2.4"/><path d="M187.5,3 L187.5,29" stroke="#505050"/><path d="M197,8 L197,24 M195,10 L197,8 L199,10 M195,22 L197,24 L199,22" stroke="#202020" stroke-width="1.2" fill="none"/><circle cx="204" cy="15" r="4.6" fill="#d8d8d8" stroke="#202020" stroke-width="1.2"/><path d="M207,18 L211,22" stroke="#181818" stroke-width="2.4"/><path d="M201.5,15 L206.5,15" stroke="#000" stroke-width="1.2"/><path d="M204,12.5 L204,17.5" stroke="#000" stroke-width="1.2"/><path d="M226,8 L226,24 M224,10 L226,8 L228,10 M224,22 L226,24 L228,22" stroke="#202020" stroke-width="1.2" fill="none"/><circle cx="233" cy="15" r="4.6" fill="#d8d8d8" stroke="#202020" stroke-width="1.2"/><path d="M236,18 L240,22" stroke="#181818" stroke-width="2.4"/><path d="M230.5,15 L235.5,15" stroke="#000" stroke-width="1.2"/></svg><svg class="a" style="left:0;top:0" width="1280" height="800"><defs><linearGradient id="gsel" x1="0" y1="612.7" x2="0" y2="630.2" gradientUnits="userSpaceOnUse"><stop offset="0" stop-color="#d2d2d2"/><stop offset="1" stop-color="#b2b2b2"/></linearGradient><linearGradient id="gselh" x1="0" y1="606.7" x2="0" y2="628.2" gradientUnits="userSpaceOnUse"><stop offset="0" stop-color="#5c5c5c"/><stop offset="1" stop-color="#989898"/></linearGradient><clipPath id="gselc"><rect x="0" y="0" width="1280" height="628.7"/></clipPath></defs><rect x="967" y="606.7" width="311" height="21.5" fill="url(#gselh)"/><path d="M967,671L967,628.2L973.7,628.2L973.7,616.7Q973.7,612.7 977.7,612.7L1071,612.7C1077,612.7 1078,628.2 1085,628.2L1245,628.2C1251,628.2 1251,612.7 1259,612.7L1277,612.7L1278,613.7L1278,671Z" fill="#ababab"/><path d="M967,671L967,628.2L973.7,628.2L973.7,616.7Q973.7,612.7 977.7,612.7L1071,612.7C1077,612.7 1078,628.2 1085,628.2L1245,628.2C1251,628.2 1251,612.7 1259,612.7L1277,612.7L1278,613.7L1278,671Z" fill="url(#gsel)" clip-path="url(#gselc)"/><path d="M967,671L967,628.2L973.7,628.2L973.7,616.7Q973.7,612.7 977.7,612.7L1071,612.7C1077,612.7 1078,628.2 1085,628.2L1245,628.2C1251,628.2 1251,612.7 1259,612.7L1277,612.7" fill="none" stroke="#e0e0e0" stroke-width="1" clip-path="url(#gselc)"/><rect x="977.8" y="616.3" width="2" height="2" fill="#f8f8f8"/><rect x="977.2" y="615.7" width="1.8" height="1.8" fill="#909090"/><rect x="981.8" y="616.3" width="2" height="2" fill="#f8f8f8"/><rect x="981.2" y="615.7" width="1.8" height="1.8" fill="#909090"/><rect x="977.8" y="620.1" width="2" height="2" fill="#f8f8f8"/><rect x="977.2" y="619.5" width="1.8" height="1.8" fill="#909090"/><rect x="981.8" y="620.1" width="2" height="2" fill="#f8f8f8"/><rect x="981.2" y="619.5" width="1.8" height="1.8" fill="#909090"/><rect x="977.8" y="623.9" width="2" height="2" fill="#f8f8f8"/><rect x="977.2" y="623.3" width="1.8" height="1.8" fill="#909090"/><rect x="981.8" y="623.9" width="2" height="2" fill="#f8f8f8"/><rect x="981.2" y="623.3" width="1.8" height="1.8" fill="#909090"/><text x="985.4" y="624.9000000000001" font-family="Liberation Sans" font-size="11" fill="#111" textLength="71.4" lengthAdjust="spacingAndGlyphs">Selection/View</text><path d="M1064.4,619.0000000000001 L1069.6,623.6 M1069.6,619.0000000000001 L1064.4,623.6" stroke="#000" stroke-width="1.7"/><rect x="1256" y="617.2" width="2" height="2" fill="#f4f4f4"/><rect x="1256" y="617.2" width="1.3" height="1.3" fill="#7a7a7a"/><rect x="1260" y="617.2" width="2" height="2" fill="#f4f4f4"/><rect x="1260" y="617.2" width="1.3" height="1.3" fill="#7a7a7a"/><rect x="1252" y="621.0" width="2" height="2" fill="#f4f4f4"/><rect x="1252" y="621.0" width="1.3" height="1.3" fill="#7a7a7a"/><rect x="1256" y="621.0" width="2" height="2" fill="#f4f4f4"/><rect x="1256" y="621.0" width="1.3" height="1.3" fill="#7a7a7a"/><circle cx="1267.2" cy="621.2" r="5.5" fill="#c8c8c8" stroke="#3a3a3a" stroke-width="1.1"/><path d="M1265.2,618.2 L1270.2,621.2 L1265.2,624.2Z" fill="#000"/></svg><div class="t" style="left:1025.00px;top:633.69px;font-size:11px;color:#111;font-weight:normal;font-family:'Liberation Sans',sans-serif;transform:scaleX(0.9952);transform-origin:0 0;">Begin</div><div class="t" style="left:1100.00px;top:633.69px;font-size:11px;color:#111;font-weight:normal;font-family:'Liberation Sans',sans-serif;transform:scaleX(0.9196);transform-origin:0 0;">End</div><div class="t" style="left:1175.00px;top:633.69px;font-size:11px;color:#111;font-weight:normal;font-family:'Liberation Sans',sans-serif;transform:scaleX(1.0254);transform-origin:0 0;">Length</div><div class="t" style="left:972.00px;top:651.49px;font-size:11px;color:#111;font-weight:normal;font-family:'Liberation Sans',sans-serif;transform:scaleX(0.9834);transform-origin:0 0;">Selection</div><div class="a" style="left:1020.5px;top:649.5px;width:71px;height:16px;background:linear-gradient(#f0f0f0,#dcdcdc);border:1px solid #6e6e6e;border-radius:3px"></div><div class="t" style="left:1032.20px;top:651.99px;font-size:11px;color:#111;font-weight:normal;font-family:'Liberation Sans',sans-serif;transform:scaleX(0.9692);transform-origin:0 0;">0:16.224</div><div class="a" style="left:1095.5px;top:649.5px;width:71px;height:16px;background:linear-gradient(#f0f0f0,#dcdcdc);border:1px solid #6e6e6e;border-radius:3px"></div><div class="a" style="left:1170.5px;top:649.5px;width:71px;height:16px;background:linear-gradient(#f0f0f0,#dcdcdc);border:1px solid #6e6e6e;border-radius:3px"></div><div class="t" style="left:1182.20px;top:651.99px;font-size:11px;color:#111;font-weight:normal;font-family:'Liberation Sans',sans-serif;transform:scaleX(0.9692);transform-origin:0 0;">0:00.000</div><svg class="a" style="left:0;top:0" width="1280" height="800"><defs><linearGradient id="glev" x1="0" y1="679.8" x2="0" y2="697.3" gradientUnits="userSpaceOnUse"><stop offset="0" stop-color="#d2d2d2"/><stop offset="1" stop-color="#b2b2b2"/></linearGradient><linearGradient id="glevh" x1="0" y1="673.8" x2="0" y2="695.3" gradientUnits="userSpaceOnUse"><stop offset="0" stop-color="#5c5c5c"/><stop offset="1" stop-color="#989898"/></linearGradient><clipPath id="glevc"><rect x="0" y="0" width="1280" height="695.8"/></clipPath></defs><rect x="2" y="673.8" width="1276" height="21.5" fill="url(#glevh)"/><path d="M2,746L2,695.3L8.75,695.3L8.75,683.8Q8.75,679.8 12.75,679.8L63.5,679.8C69.5,679.8 70.5,695.3 77.5,695.3L1242.5,695.3C1248.5,695.3 1248.5,679.8 1256.5,679.8L1277,679.8L1278,680.8L1278,746Z" fill="#ababab"/><path d="M2,746L2,695.3L8.75,695.3L8.75,683.8Q8.75,679.8 12.75,679.8L63.5,679.8C69.5,679.8 70.5,695.3 77.5,695.3L1242.5,695.3C1248.5,695.3 1248.5,679.8 1256.5,679.8L1277,679.8L1278,680.8L1278,746Z" fill="url(#glev)" clip-path="url(#glevc)"/><path d="M2,746L2,695.3L8.75,695.3L8.75,683.8Q8.75,679.8 12.75,679.8L63.5,679.8C69.5,679.8 70.5,695.3 77.5,695.3L1242.5,695.3C1248.5,695.3 1248.5,679.8 1256.5,679.8L1277,679.8" fill="none" stroke="#e0e0e0" stroke-width="1" clip-path="url(#glevc)"/><rect x="12.8" y="683.4" width="2" height="2" fill="#f8f8f8"/><rect x="12.2" y="682.8" width="1.8" height="1.8" fill="#909090"/><rect x="16.9" y="683.4" width="2" height="2" fill="#f8f8f8"/><rect x="16.2" y="682.8" width="1.8" height="1.8" fill="#909090"/><rect x="12.8" y="687.2" width="2" height="2" fill="#f8f8f8"/><rect x="12.2" y="686.6" width="1.8" height="1.8" fill="#909090"/><rect x="16.9" y="687.2" width="2" height="2" fill="#f8f8f8"/><rect x="16.2" y="686.6" width="1.8" height="1.8" fill="#909090"/><rect x="12.8" y="691.0" width="2" height="2" fill="#f8f8f8"/><rect x="12.2" y="690.4" width="1.8" height="1.8" fill="#909090"/><rect x="16.9" y="691.0" width="2" height="2" fill="#f8f8f8"/><rect x="16.2" y="690.4" width="1.8" height="1.8" fill="#909090"/><text x="20.6" y="692.0" font-family="Liberation Sans" font-size="11" fill="#111" textLength="29.4" lengthAdjust="spacingAndGlyphs">Levels</text><path d="M58.4,686.1 L63.6,690.6999999999999 M63.6,686.1 L58.4,690.6999999999999" stroke="#000" stroke-width="1.7"/><rect x="1253.5" y="684.3" width="2" height="2" fill="#f4f4f4"/><rect x="1253.5" y="684.3" width="1.3" height="1.3" fill="#7a7a7a"/><rect x="1257.5" y="684.3" width="2" height="2" fill="#f4f4f4"/><rect x="1257.5" y="684.3" width="1.3" height="1.3" fill="#7a7a7a"/><rect x="1249.5" y="688.0999999999999" width="2" height="2" fill="#f4f4f4"/><rect x="1249.5" y="688.0999999999999" width="1.3" height="1.3" fill="#7a7a7a"/><rect x="1253.5" y="688.0999999999999" width="2" height="2" fill="#f4f4f4"/><rect x="1253.5" y="688.0999999999999" width="1.3" height="1.3" fill="#7a7a7a"/><circle cx="1267.2" cy="688.3" r="5.5" fill="#c8c8c8" stroke="#3a3a3a" stroke-width="1.1"/><path d="M1265.2,685.3 L1270.2,688.3 L1265.2,691.3Z" fill="#000"/></svg><div class="a" style="left:5px;top:697px;width:1270px;height:31px;background:#000;border-bottom:1px solid #c8c8c8"></div><div class="a" style="left:6px;top:697px;width:1px;height:30px;background:#e8e860"></div><div class="a" style="left:1265px;top:697px;width:1px;height:30px;background:#d8d8d8"></div><svg class="a" style="left:0;top:728px" width="1280" height="18"><rect x="1263" y="0.5" width="1" height="3" fill="#1a1a1a"/><rect x="1246" y="0.5" width="1" height="2" fill="#1a1a1a"/><rect x="1228" y="0.5" width="1" height="2" fill="#1a1a1a"/><rect x="1211" y="0.5" width="1" height="3" fill="#1a1a1a"/><rect x="1193" y="0.5" width="1" height="2" fill="#1a1a1a"/><rect x="1176" y="0.5" width="1" height="2" fill="#1a1a1a"/><rect x="1158" y="0.5" width="1" height="3" fill="#1a1a1a"/><rect x="1141" y="0.5" width="1" height="2" fill="#1a1a1a"/><rect x="1123" y="0.5" width="1" height="2" fill="#1a1a1a"/><rect x="1106" y="0.5" width="1" height="3" fill="#1a1a1a"/><rect x="1088" y="0.5" width="1" height="2" fill="#1a1a1a"/><rect x="1071" y="0.5" width="1" height="2" fill="#1a1a1a"/><rect x="1053" y="0.5" width="1" height="3" fill="#1a1a1a"/><rect x="1036" y="0.5" width="1" height="2" fill="#1a1a1a"/><rect x="1019" y="0.5" width="1" height="2" fill="#1a1a1a"/><rect x="1001" y="0.5" width="1" height="3" fill="#1a1a1a"/><rect x="984" y="0.5" width="1" height="2" fill="#1a1a1a"/><rect x="966" y="0.5" width="1" height="2" fill="#1a1a1a"/><rect x="949" y="0.5" width="1" height="3" fill="#1a1a1a"/><rect x="931" y="0.5" width="1" height="2" fill="#1a1a1a"/><rect x="914" y="0.5" width="1" height="2" fill="#1a1a1a"/><rect x="896" y="0.5" width="1" height="3" fill="#1a1a1a"/><rect x="879" y="0.5" width="1" height="2" fill="#1a1a1a"/><rect x="861" y="0.5" width="1" height="2" fill="#1a1a1a"/><rect x="844" y="0.5" width="1" height="3" fill="#1a1a1a"/><rect x="826" y="0.5" width="1" height="2" fill="#1a1a1a"/><rect x="809" y="0.5" width="1" height="2" fill="#1a1a1a"/><rect x="791" y="0.5" width="1" height="3" fill="#1a1a1a"/><rect x="774" y="0.5" width="1" height="2" fill="#1a1a1a"/><rect x="757" y="0.5" width="1" height="2" fill="#1a1a1a"/><rect x="739" y="0.5" width="1" height="3" fill="#1a1a1a"/><rect x="722" y="0.5" width="1" height="2" fill="#1a1a1a"/><rect x="704" y="0.5" width="1" height="2" fill="#1a1a1a"/><rect x="687" y="0.5" width="1" height="3" fill="#1a1a1a"/><rect x="669" y="0.5" width="1" height="2" fill="#1a1a1a"/><rect x="652" y="0.5" width="1" height="2" fill="#1a1a1a"/><rect x="634" y="0.5" width="1" height="3" fill="#1a1a1a"/><rect x="617" y="0.5" width="1" height="2" fill="#1a1a1a"/><rect x="599" y="0.5" width="1" height="2" fill="#1a1a1a"/><rect x="582" y="0.5" width="1" height="3" fill="#1a1a1a"/><rect x="564" y="0.5" width="1" height="2" fill="#1a1a1a"/><rect x="547" y="0.5" width="1" height="2" fill="#1a1a1a"/><rect x="530" y="0.5" width="1" height="3" fill="#1a1a1a"/><rect x="512" y="0.5" width="1" height="2" fill="#1a1a1a"/><rect x="495" y="0.5" width="1" height="2" fill="#1a1a1a"/><rect x="477" y="0.5" width="1" height="3" fill="#1a1a1a"/><rect x="460" y="0.5" width="1" height="2" fill="#1a1a1a"/><rect x="442" y="0.5" width="1" height="2" fill="#1a1a1a"/><rect x="425" y="0.5" width="1" height="3" fill="#1a1a1a"/><rect x="407" y="0.5" width="1" height="2" fill="#1a1a1a"/><rect x="390" y="0.5" width="1" height="2" fill="#1a1a1a"/><rect x="372" y="0.5" width="1" height="3" fill="#1a1a1a"/><rect x="355" y="0.5" width="1" height="2" fill="#1a1a1a"/><rect x="337" y="0.5" width="1" height="2" fill="#1a1a1a"/><rect x="320" y="0.5" width="1" height="3" fill="#1a1a1a"/><rect x="303" y="0.5" width="1" height="2" fill="#1a1a1a"/><rect x="285" y="0.5" width="1" height="2" fill="#1a1a1a"/><rect x="268" y="0.5" width="1" height="3" fill="#1a1a1a"/><rect x="250" y="0.5" width="1" height="2" fill="#1a1a1a"/><rect x="233" y="0.5" width="1" height="2" fill="#1a1a1a"/><rect x="215" y="0.5" width="1" height="3" fill="#1a1a1a"/><rect x="198" y="0.5" width="1" height="2" fill="#1a1a1a"/><rect x="180" y="0.5" width="1" height="2" fill="#1a1a1a"/><rect x="163" y="0.5" width="1" height="3" fill="#1a1a1a"/><rect x="145" y="0.5" width="1" height="2" fill="#1a1a1a"/><rect x="128" y="0.5" width="1" height="2" fill="#1a1a1a"/><rect x="110" y="0.5" width="1" height="3" fill="#1a1a1a"/><rect x="93" y="0.5" width="1" height="2" fill="#1a1a1a"/><rect x="75" y="0.5" width="1" height="2" fill="#1a1a1a"/><rect x="58" y="0.5" width="1" height="3" fill="#1a1a1a"/><rect x="41" y="0.5" width="1" height="2" fill="#1a1a1a"/><rect x="23" y="0.5" width="1" height="2" fill="#1a1a1a"/><rect x="6" y="0.5" width="1" height="3" fill="#1a1a1a"/><text x="1261.7" y="13.1" font-family="Liberation Sans" font-size="9.6" fill="#080808" textLength="4.6" lengthAdjust="spacingAndGlyphs">0</text><text x="1207.6" y="13.1" font-family="Liberation Sans" font-size="9.6" fill="#080808" textLength="8" lengthAdjust="spacingAndGlyphs">-3</text><text x="1155.2" y="13.1" font-family="Liberation Sans" font-size="9.6" fill="#080808" textLength="8" lengthAdjust="spacingAndGlyphs">-6</text><text x="1102.8" y="13.1" font-family="Liberation Sans" font-size="9.6" fill="#080808" textLength="8" lengthAdjust="spacingAndGlyphs">-9</text><text x="1048.2" y="13.1" font-family="Liberation Sans" font-size="9.6" fill="#080808" textLength="12.5" lengthAdjust="spacingAndGlyphs">-12</text><text x="995.8" y="13.1" font-family="Liberation Sans" font-size="9.6" fill="#080808" textLength="12.5" lengthAdjust="spacingAndGlyphs">-15</text><text x="943.4" y="13.1" font-family="Liberation Sans" font-size="9.6" fill="#080808" textLength="12.5" lengthAdjust="spacingAndGlyphs">-18</text><text x="891.0" y="13.1" font-family="Liberation Sans" font-size="9.6" fill="#080808" textLength="12.5" lengthAdjust="spacingAndGlyphs">-21</text><text x="838.6" y="13.1" font-family="Liberation Sans" font-size="9.6" fill="#080808" textLength="12.5" lengthAdjust="spacingAndGlyphs">-24</text><text x="786.2" y="13.1" font-family="Liberation Sans" font-size="9.6" fill="#080808" textLength="12.5" lengthAdjust="spacingAndGlyphs">-27</text><text x="733.9" y="13.1" font-family="Liberation Sans" font-size="9.6" fill="#080808" textLength="12.5" lengthAdjust="spacingAndGlyphs">-30</text><text x="681.5" y="13.1" font-family="Liberation Sans" font-size="9.6" fill="#080808" textLength="12.5" lengthAdjust="spacingAndGlyphs">-33</text><text x="629.1" y="13.1" font-family="Liberation Sans" font-size="9.6" fill="#080808" textLength="12.5" lengthAdjust="spacingAndGlyphs">-36</text><text x="576.7" y="13.1" font-family="Liberation Sans" font-size="9.6" fill="#080808" textLength="12.5" lengthAdjust="spacingAndGlyphs">-39</text><text x="524.3" y="13.1" font-family="Liberation Sans" font-size="9.6" fill="#080808" textLength="12.5" lengthAdjust="spacingAndGlyphs">-42</text><text x="471.9" y="13.1" font-family="Liberation Sans" font-size="9.6" fill="#080808" textLength="12.5" lengthAdjust="spacingAndGlyphs">-45</text><text x="419.5" y="13.1" font-family="Liberation Sans" font-size="9.6" fill="#080808" textLength="12.5" lengthAdjust="spacingAndGlyphs">-48</text><text x="367.1" y="13.1" font-family="Liberation Sans" font-size="9.6" fill="#080808" textLength="12.5" lengthAdjust="spacingAndGlyphs">-51</text><text x="314.7" y="13.1" font-family="Liberation Sans" font-size="9.6" fill="#080808" textLength="12.5" lengthAdjust="spacingAndGlyphs">-54</text><text x="262.3" y="13.1" font-family="Liberation Sans" font-size="9.6" fill="#080808" textLength="12.5" lengthAdjust="spacingAndGlyphs">-57</text><text x="210.0" y="13.1" font-family="Liberation Sans" font-size="9.6" fill="#080808" textLength="12.5" lengthAdjust="spacingAndGlyphs">-60</text><text x="157.6" y="13.1" font-family="Liberation Sans" font-size="9.6" fill="#080808" textLength="12.5" lengthAdjust="spacingAndGlyphs">-63</text><text x="105.2" y="13.1" font-family="Liberation Sans" font-size="9.6" fill="#080808" textLength="12.5" lengthAdjust="spacingAndGlyphs">-66</text><text x="52.8" y="13.1" font-family="Liberation Sans" font-size="9.6" fill="#080808" textLength="12.5" lengthAdjust="spacingAndGlyphs">-69</text><text x="5.6" y="13.1" font-family="Liberation Sans" font-size="9.6" fill="#080808" textLength="10" lengthAdjust="spacingAndGlyphs">dB</text></svg><div class="a" style="left:0;top:746px;width:1280px;height:3px;background:#555"></div><div class="a" style="left:0;top:749px;width:1280px;height:21px;background:linear-gradient(#d4d4d4,#c8c8c8 40%,#bebebe)"></div><div class="t" style="left:6.50px;top:753.47px;font-size:11.5px;color:#111;font-weight:normal;font-family:'Liberation Sans',sans-serif;transform:scaleX(0.9543);transform-origin:0 0;">Completed in 2.89 seconds</div><div class="t" style="left:567.00px;top:753.47px;font-size:11.5px;color:#111;font-weight:normal;font-family:'Liberation Sans',sans-serif;transform:scaleX(0.9338);transform-origin:0 0;">-30.2dB @</div><div class="t" style="left:628.30px;top:753.47px;font-size:11.5px;color:#111;font-weight:normal;font-family:'Liberation Sans',sans-serif;transform:scaleX(0.9606);transform-origin:0 0;">0:16.224</div><div class="a" style="left:680px;top:749px;width:1px;height:21px;background:#9a9a9a;box-shadow:1px 0 0 #ececec"></div><div class="a" style="left:815px;top:749px;width:1px;height:21px;background:#9a9a9a;box-shadow:1px 0 0 #ececec"></div><div class="a" style="left:891px;top:749px;width:1px;height:21px;background:#9a9a9a;box-shadow:1px 0 0 #ececec"></div><div class="a" style="left:988px;top:749px;width:1px;height:21px;background:#9a9a9a;box-shadow:1px 0 0 #ececec"></div><div class="a" style="left:1093px;top:749px;width:1px;height:21px;background:#9a9a9a;box-shadow:1px 0 0 #ececec"></div><div class="a" style="left:1167px;top:749px;width:1px;height:21px;background:#9a9a9a;box-shadow:1px 0 0 #ececec"></div><div class="t" style="left:688.30px;top:753.47px;font-size:11.5px;color:#111;font-weight:normal;font-family:'Liberation Sans',sans-serif;transform:scaleX(0.9878);transform-origin:0 0;">96000 • 32-bit • Mono</div><div class="t" style="left:822.00px;top:753.47px;font-size:11.5px;color:#111;font-weight:normal;font-family:'Liberation Sans',sans-serif;transform:scaleX(0.9259);transform-origin:0 0;">121.25 MB</div><div class="t" style="left:899.00px;top:753.47px;font-size:11.5px;color:#111;font-weight:normal;font-family:'Liberation Sans',sans-serif;transform:scaleX(0.9432);transform-origin:0 0;">9.27 GB free</div><div class="t" style="left:995.80px;top:753.47px;font-size:11.5px;color:#111;font-weight:normal;font-family:'Liberation Sans',sans-serif;transform:scaleX(0.9730);transform-origin:0 0;">7:12:14.248 free</div><div class="t" style="left:1175.00px;top:753.47px;font-size:11.5px;color:#111;font-weight:normal;font-family:'Liberation Sans',sans-serif;transform:scaleX(0.9717);transform-origin:0 0;">Waveform</div><div class="a" style="left:0;top:770px;width:1280px;height:30px;background:linear-gradient(#404088 0,#404088 1px,#9aaaf8 1px,#9aaaf8 2.5px,#3a58a0 2.5px,#3858a2 6px,#3c50a8 8px,#2c4890 12px,#233a84 18px,#1c2a74 25px,#18226a 30px)"></div><div class="a" style="left:228px;top:772px;width:159px;height:28px;background:linear-gradient(#3454b4,#2a4cb0 40%,#2040a0);border-radius:2px"></div><svg class="a" style="left:8px;top:770px" width="44" height="30"><defs><radialGradient id="orb" cx="0.5" cy="0.3" r="0.7"><stop offset="0" stop-color="#b0e0f0"/><stop offset="0.45" stop-color="#4a90c0"/><stop offset="1" stop-color="#1a4a80"/></radialGradient></defs>
<circle cx="21.5" cy="16" r="19" fill="#081028"/><circle cx="21.5" cy="16" r="16.5" fill="url(#orb)"/>
<path d="M13,9 Q17,7 20,9 L19,15 Q16,13 12,15Z" fill="#f06020"/>
<path d="M21,9 Q25,11 29,9 L28,16 Q24,17 20,15Z" fill="#80c030"/>
<path d="M12,16 Q16,14 19,16 L18,23 Q15,21 11,23Z" fill="#30a0e8"/>
<path d="M20,16 Q24,18 28,16 L27,24 Q23,25 19,23Z" fill="#f8c020"/>
<ellipse cx="21.5" cy="8" rx="12" ry="6" fill="#ffffff" opacity="0.2"/></svg><svg class="a" style="left:60px;top:772px" width="150" height="26">
<path d="M13,6 L22,5 Q25,5 24,8 L23,16 Q22,19 19,19 L12,19 Q9,19 10,16 L11,9 Q11,6 13,6Z" fill="#eaf4ff" stroke="#7ab0f0" stroke-width="1.5"/>
<path d="M14,10 L20,9 L19,15 L15,16 M16,14 L24,8" stroke="#2060c0" stroke-width="1.6" fill="none"/><path d="M22,10 L27,9" stroke="#e04040" stroke-width="1"/>
<path d="M40,4 L40,15" stroke="#f0f0f0" stroke-width="1.6"/><path d="M33,15.5 L48,15.5" stroke="#f0f0f0" stroke-width="1.6"/><circle cx="40.5" cy="15.5" r="3" fill="#f0d030"/>
<rect x="59.5" y="5.5" width="8" height="15" rx="2" fill="#e8ecf4" stroke="#a0a8c0"/><rect x="61" y="7.5" width="5" height="4" fill="#6a9ad8"/><path d="M61.5,14 L62.5,14 M63.5,14 L64.5,14 M65.5,14 L66,14 M61.5,16 L62.5,16 M63.5,16 L64.5,16 M65.5,16 L66,16 M61.5,18 L62.5,18 M63.5,18 L64.5,18" stroke="#8088a0" stroke-width="1"/>
<circle cx="88" cy="14" r="5.5" fill="none" stroke="#3a90e8" stroke-width="2.6"/><path d="M83,14 L93,14" stroke="#3a90e8" stroke-width="2"/><path d="M81,19 Q84,6 95,6" stroke="#e8c040" stroke-width="1.5" fill="none"/><path d="M93,13 L88,17" stroke="#10204a" stroke-width="0" />
<rect x="103" y="5" width="15" height="15" fill="#fff"/><rect x="104" y="6" width="13" height="13" fill="#f0e040"/><path d="M104,12 Q106,8 108,10 L109,8 L110.5,10 L112,8 L113,10 Q115,8 117,12 Q114,15 112,14 L110.5,17 L109,14 Q107,15 104,12Z" fill="#000"/>
<rect x="126" y="5" width="14" height="15" fill="#c0f0c8"/><rect x="127" y="6" width="12" height="13" fill="#10a030"/><path d="M130,9 L130,17 M130,14 Q130,15 132.5,15 Q135,15 135,13 L135,9 M135,14 L136,15" stroke="#f0fff0" stroke-width="1.8" fill="none"/>
</svg><div class="a" style="left:239px;top:778px;width:15px;height:14px;background:linear-gradient(#7a9a98,#3a6066);border:1px solid #2a4048"></div><div class="t" style="left:240.50px;top:780.88px;font-size:9px;color:#f0f8f8;font-weight:bold;font-family:'Liberation Sans',sans-serif;transform:scaleX(0.9169);transform-origin:0 0;">Au</div><div class="t" style="left:258.80px;top:779.82px;font-size:12.5px;color:#f4f4ff;font-weight:normal;font-family:'Liberation Sans',sans-serif;transform:scaleX(0.9645);transform-origin:0 0;">Adobe Audition - Ле...</div><svg class="a" style="left:398px;top:776px" width="14" height="18"><path d="M3,2 L5,10 M7,1 L7,10 M11,2 L9,10" stroke="#f0a040" stroke-width="2"/><path d="M2,10 L12,10 L10,17 L4,17Z" fill="#e0d0a0" stroke="#806040"/><path d="M4,4 L6,12" stroke="#e03030" stroke-width="1.5"/></svg><div class="t" style="left:418.60px;top:779.82px;font-size:12.5px;color:#f4f4ff;font-weight:normal;font-family:'Liberation Sans',sans-serif;transform:scaleX(0.9638);transform-origin:0 0;">16bit-44,1kHz - Paint</div><svg class="a" style="left:557px;top:778px" width="17" height="14"><path d="M1,2 L6,2 L7,4 L15,4 L15,13 L1,13Z" fill="#e8b830" stroke="#906010" stroke-width="0.8"/><path d="M1,13 L3,6 L16,6 L15,13Z" fill="#f8d860" stroke="#906010" stroke-width="0.8"/></svg><div class="t" style="left:577.80px;top:779.82px;font-size:12.5px;color:#f4f4ff;font-weight:normal;font-family:'Liberation Sans',sans-serif;transform:scaleX(0.9350);transform-origin:0 0;">0</div><div class="t" style="left:1061px;top:780px;font-size:13px;color:#60d0d0;font-weight:normal;letter-spacing:-1px">RL</div><svg class="a" style="left:1088px;top:776px" width="148" height="20">
<rect x="8.5" y="1.5" width="9" height="8" fill="#404868" stroke="#d0d8f0"/><rect x="2.5" y="5.5" width="9" height="8" fill="#303858" stroke="#d0d8f0"/><ellipse cx="7" cy="16" rx="5" ry="2" fill="#d8e0f8"/><ellipse cx="13" cy="13" rx="4" ry="1.8" fill="#c0c8e8"/>
<rect x="26.5" y="1.5" width="9" height="8" fill="#404868" stroke="#d0d8f0"/><rect x="20.5" y="5.5" width="9" height="8" fill="#303858" stroke="#d0d8f0"/><ellipse cx="25" cy="16" rx="5" ry="2" fill="#d8e0f8"/><path d="M29,11 L36,18 M36,11 L29,18" stroke="#e03030" stroke-width="2.4"/>
<rect x="40" y="2" width="15" height="14" fill="#fff"/><path d="M41,3 L45,3 L45,8 L51,3 L54,3 L47,10 L41,15Z" fill="#e02828"/><rect x="49" y="11" width="6" height="5" fill="#202020" stroke="#fff" stroke-width="0.8"/>
<rect x="59" y="1" width="13" height="16" rx="3" fill="#1050d0"/><path d="M62,5 L68,11 L65,14 L65,4 L68,7 L62,13" stroke="#fff" stroke-width="1.3" fill="none"/>
<rect x="75" y="1" width="16" height="16" fill="#0a1a70"/><text x="76" y="14" font-family="Liberation Sans" font-size="11" fill="#f0f0ff">Ru</text>
<circle cx="99" cy="8" r="6" fill="#b8b8c0" stroke="#505060"/><circle cx="98" cy="7" r="2.5" fill="#606070"/><path d="M101,15 Q106,13 107,9" stroke="#6080e0" fill="none"/>
<rect x="110" y="3" width="5" height="12" fill="none" stroke="#8090c0"/><path d="M118,2 L114,10 L118,10 L115,17 L122,7 L118,7 L121,2Z" fill="#f0a020"/>
<path d="M128,2 L131,12 L139,15 L142,13 L133,10 L131,3Z" fill="#e0e0e0" stroke="#303030" stroke-width="0.8"/><path d="M137,13 L143,11 L144,15 L138,17Z" fill="#e0e020" stroke="#606000" stroke-width="0.8"/>
</svg><div class="t" style="left:1240.00px;top:781.00px;font-size:13px;color:#f4f4ff;font-weight:normal;font-family:'Liberation Sans',sans-serif;transform:scaleX(0.9529);transform-origin:0 0;">10:29</div></div></body></html>
